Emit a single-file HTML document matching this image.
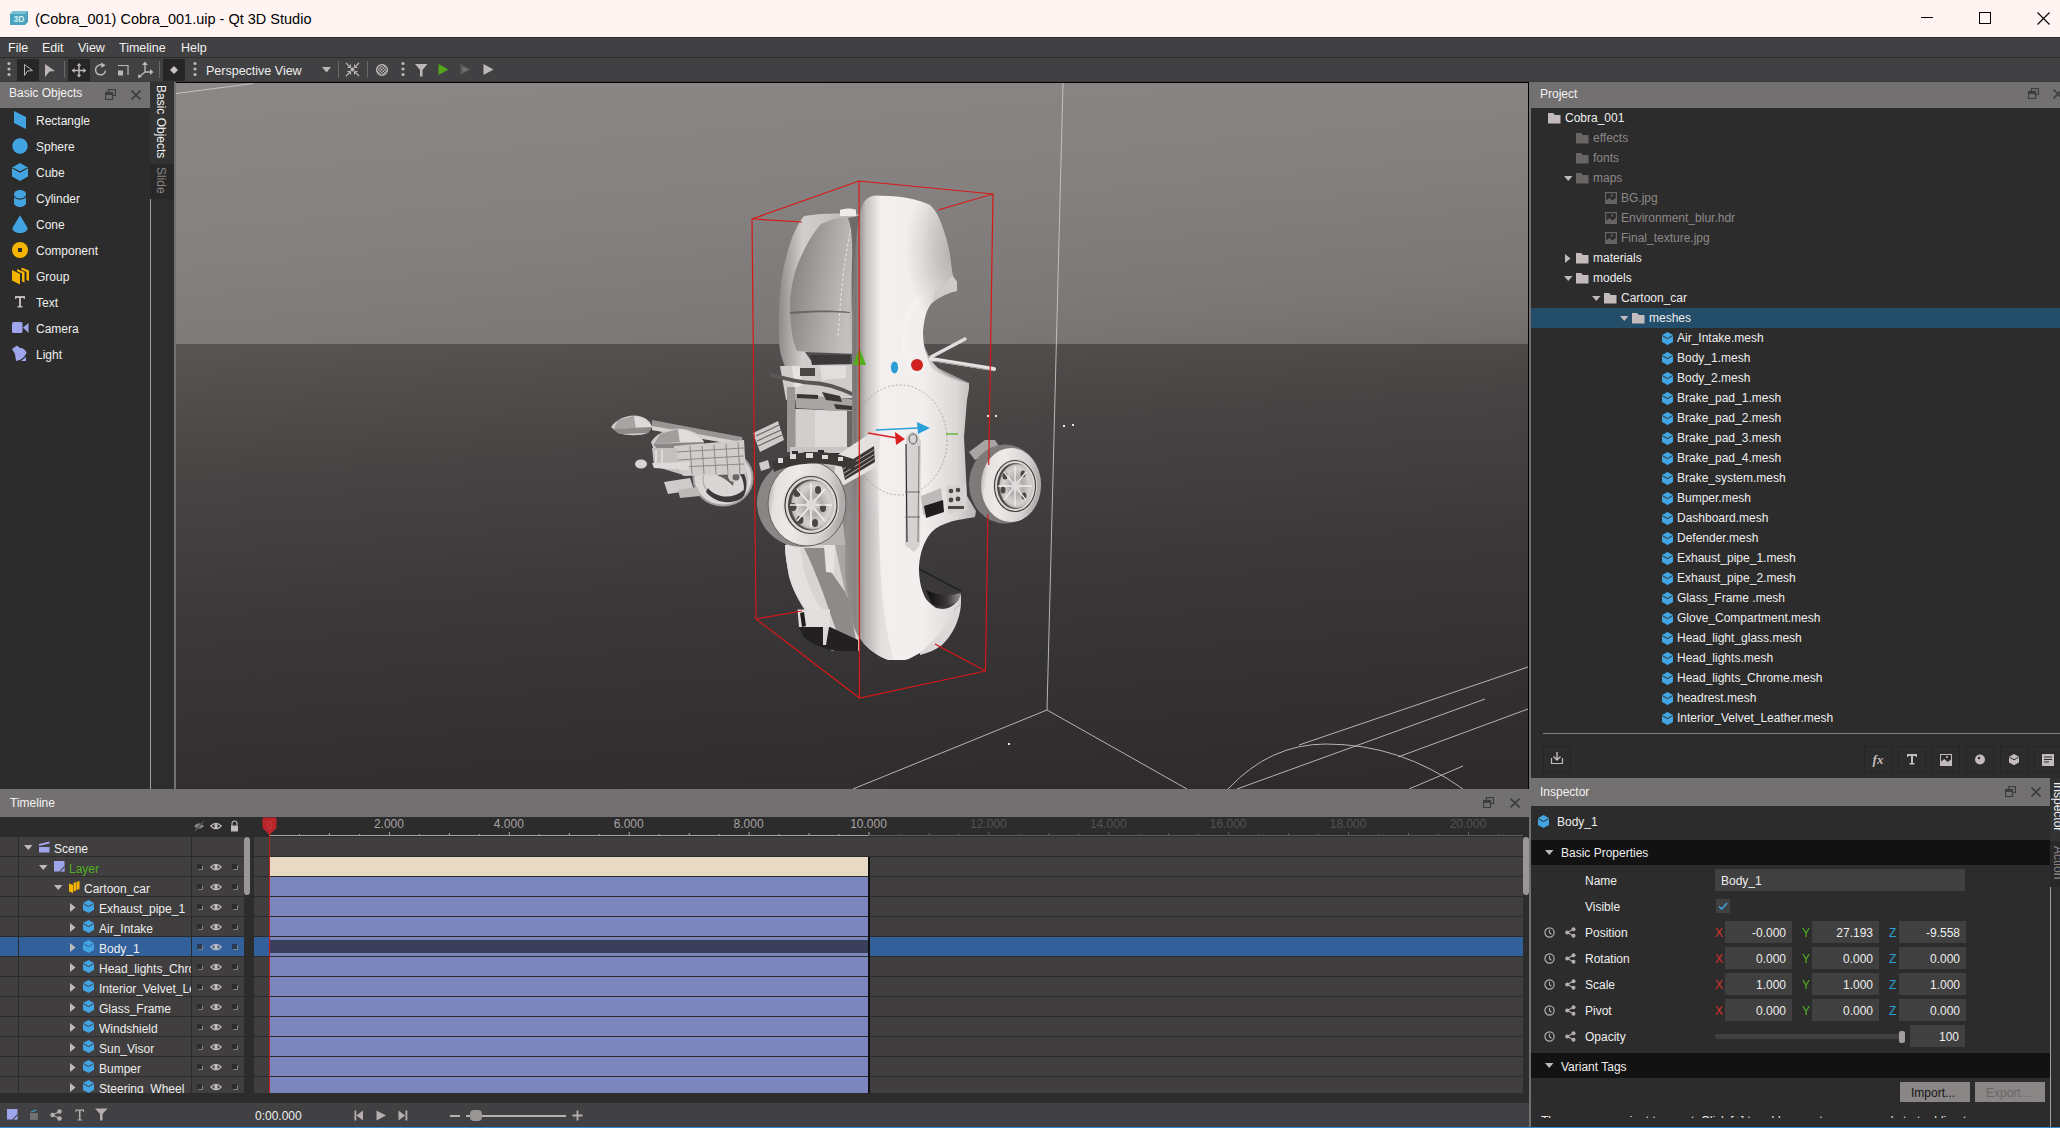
<!DOCTYPE html><html><head><meta charset="utf-8"><style>
*{margin:0;padding:0;box-sizing:border-box}
html,body{width:2060px;height:1128px;overflow:hidden;background:#2e2d2e;font-family:"Liberation Sans",sans-serif}
body>div,body>span,body>svg{position:absolute}
.t{position:absolute;white-space:pre;line-height:1;}
</style></head><body><div style="left:0px;top:0px;width:2060px;height:37px;background:#fff4f2;"></div>
<svg style="left:10px;top:11px;" width="18" height="14" viewBox="0 0 18 14"><path d="M3,0 H18 V11 L15,14 H0 V3 Z" fill="#4aa3bf"/><path d="M3,0 H18 L15,3 H0 Z" fill="#7cc0d4"/><text x="9" y="11" font-size="8.5" font-family="Liberation Sans" font-weight="bold" fill="#d8eef4" text-anchor="middle">3D</text></svg>
<span class="t" style="left:35px;top:11.73px;font-size:14.5px;color:#000000;">(Cobra_001) Cobra_001.uip - Qt 3D Studio</span>
<div style="left:1921px;top:17px;width:12px;height:1px;background:#000;"></div>
<div style="left:1979px;top:12px;width:12px;height:12px;background:transparent;border:1px solid #000"></div>
<svg style="left:2037px;top:12px;" width="13" height="13" viewBox="0 0 13 13"><path d="M0.5,0.5 L12.5,12.5 M12.5,0.5 L0.5,12.5" stroke="#000" stroke-width="1.1"/></svg>
<div style="left:0px;top:37px;width:2060px;height:1px;background:#2a2a2a;"></div>
<div style="left:0px;top:38px;width:2060px;height:19px;background:#414042;"></div>
<span class="t" style="left:8px;top:42.42px;font-size:12.5px;color:#f2f2f2;">File</span>
<span class="t" style="left:42px;top:42.42px;font-size:12.5px;color:#f2f2f2;">Edit</span>
<span class="t" style="left:78px;top:42.42px;font-size:12.5px;color:#f2f2f2;">View</span>
<span class="t" style="left:119px;top:42.42px;font-size:12.5px;color:#f2f2f2;">Timeline</span>
<span class="t" style="left:181px;top:42.42px;font-size:12.5px;color:#f2f2f2;">Help</span>
<div style="left:0px;top:57px;width:2060px;height:1px;background:#2b2b2b;"></div>
<div style="left:0px;top:58px;width:2060px;height:24px;background:#414042;"></div>
<svg style="left:6.5px;top:61px;" width="4" height="16" viewBox="0 0 4 16"><circle cx="2" cy="2.5" r="1.6" fill="#bdb7b7"/><circle cx="2" cy="8" r="1.6" fill="#bdb7b7"/><circle cx="2" cy="13.5" r="1.6" fill="#bdb7b7"/></svg>
<div style="left:17px;top:59px;width:22px;height:22px;background:#262626;"></div>
<svg style="left:17px;top:59px;" width="22" height="22" viewBox="0 0 22 22"><path d="M7.5,5.5 L15.5,11.5 L10.5,12 L7.5,16.5 Z" fill="none" stroke="#bdb7b7" stroke-width="1"/></svg>
<svg style="left:39px;top:59px;" width="22" height="22" viewBox="0 0 22 22"><path d="M6,5 L16,12 L10.5,12.5 L6,18 Z" fill="#bdb7b7"/></svg>
<div style="left:64px;top:61px;width:1px;height:17px;background:#6a6868;"></div>
<div style="left:68px;top:59px;width:22px;height:22px;background:#262626;"></div>
<svg style="left:68px;top:59px;" width="22" height="22" viewBox="0 0 22 22"><path d="M11,5 V17.5 M4.5,11.5 H17.5" stroke="#bdb7b7" stroke-width="1.5"/><path d="M11,4 L8.6,6.8 H13.4 Z M11,18.5 L8.6,15.7 H13.4 Z M3.8,11.5 L6.6,9.1 V13.9 Z M18.2,11.5 L15.4,9.1 V13.9 Z" fill="#bdb7b7"/></svg>
<svg style="left:90px;top:59px;" width="22" height="22" viewBox="0 0 22 22"><path d="M15.5,11.5 A5,5 0 1 1 13,6.5" fill="none" stroke="#bdb7b7" stroke-width="1.5"/><path d="M11,3.5 L15.5,6 L11.5,9 Z" fill="#bdb7b7"/></svg>
<svg style="left:112px;top:59px;" width="22" height="22" viewBox="0 0 22 22"><path d="M6,6.5 H16 V16" fill="none" stroke="#bdb7b7" stroke-width="1.2"/><rect x="6" y="11.5" width="5" height="5" fill="#bdb7b7"/></svg>
<svg style="left:134px;top:59px;" width="22" height="22" viewBox="0 0 22 22"><path d="M11,4 V13 L5,18 M11,13 H17" stroke="#bdb7b7" stroke-width="1.4" fill="none"/><path d="M11,2.5 L8,6 H14 Z M19.5,13 L16,10 V16 Z M4,19 L4.5,15 L8,18 Z" fill="#bdb7b7"/></svg>
<div style="left:159px;top:61px;width:1px;height:17px;background:#6a6868;"></div>
<div style="left:163px;top:59px;width:22px;height:22px;background:#262626;"></div>
<svg style="left:163px;top:59px;" width="22" height="22" viewBox="0 0 22 22"><path d="M11,7 L15,11 L11,15 L7,11 Z" fill="#c8c2c2"/></svg>
<svg style="left:192.5px;top:61px;" width="4" height="16" viewBox="0 0 4 16"><circle cx="2" cy="2.5" r="1.6" fill="#bdb7b7"/><circle cx="2" cy="8" r="1.6" fill="#bdb7b7"/><circle cx="2" cy="13.5" r="1.6" fill="#bdb7b7"/></svg>
<span class="t" style="left:206px;top:65.42px;font-size:12.5px;color:#eeeeee;">Perspective View</span>
<svg style="left:322px;top:67px;" width="10" height="6" viewBox="0 0 10 6"><path d="M0,0 H9 L4.5,5.5 Z" fill="#bdb7b7"/></svg>
<div style="left:338px;top:61px;width:1px;height:17px;background:#6a6868;"></div>
<svg style="left:345px;top:62px;" width="15" height="15" viewBox="0 0 15 15"><circle cx="7.5" cy="7.5" r="2" fill="#bdb7b7"/><path d="M1,1 L5,5 M14,1 L10,5 M1,14 L5,10 M14,14 L10,10" stroke="#bdb7b7" stroke-width="1.1"/><path d="M5.5,5.5 H2.5 M5.5,5.5 V2.5 M9.5,5.5 H12.5 M9.5,5.5 V2.5 M5.5,9.5 H2.5 M5.5,9.5 V12.5 M9.5,9.5 H12.5 M9.5,9.5 V12.5" stroke="#bdb7b7" stroke-width="1.1"/></svg>
<div style="left:367px;top:61px;width:1px;height:17px;background:#6a6868;"></div>
<svg style="left:375px;top:63px;" width="14" height="14" viewBox="0 0 14 14"><defs><pattern id="ck" width="3" height="3" patternUnits="userSpaceOnUse"><rect width="1.5" height="1.5" fill="#bdb7b7"/><rect x="1.5" y="1.5" width="1.5" height="1.5" fill="#bdb7b7"/></pattern></defs><circle cx="7" cy="7" r="5.5" fill="url(#ck)" stroke="#bdb7b7" stroke-width="1.1"/></svg>
<svg style="left:400.5px;top:61px;" width="4" height="16" viewBox="0 0 4 16"><circle cx="2" cy="2.5" r="1.6" fill="#bdb7b7"/><circle cx="2" cy="8" r="1.6" fill="#bdb7b7"/><circle cx="2" cy="13.5" r="1.6" fill="#bdb7b7"/></svg>
<svg style="left:415px;top:64px;" width="13" height="13" viewBox="0 0 13 13"><path d="M0,0 H12.5 L7.5,6 V12.5 H5 V6 Z" fill="#bdb7b7"/></svg>
<svg style="left:438px;top:64px;" width="11" height="11" viewBox="0 0 11 11"><path d="M0.5,0 L10.5,5.5 L0.5,11 Z" fill="#55a71a"/></svg>
<svg style="left:460px;top:64px;" width="12" height="11" viewBox="0 0 12 11"><path d="M0.5,0 L10.5,5.5 L0.5,11 Z" fill="#5e5c5c"/><path d="M3,3 L7,5.5 L3,8 Z" fill="#777"/></svg>
<svg style="left:483px;top:64px;" width="11" height="11" viewBox="0 0 11 11"><path d="M0.5,0 L10.5,5.5 L0.5,11 Z" fill="#bdb7b7"/></svg>
<div style="left:0px;top:81px;width:2060px;height:1px;background:#3a393a;"></div>
<div style="left:0px;top:82px;width:150px;height:26px;background:#727070;"></div>
<span class="t" style="left:9px;top:86.84px;font-size:12px;color:#f2f2f2;">Basic Objects</span>
<svg style="left:105px;top:89px;" width="11" height="11" viewBox="0 0 11 11"><rect x="3.5" y="0.5" width="7" height="6" fill="none" stroke="#3e3d3d" stroke-width="1.2"/><rect x="0.5" y="3.5" width="7" height="7" fill="#727070" stroke="#3e3d3d" stroke-width="1.2"/><rect x="1" y="4" width="6" height="2" fill="#3e3d3d"/></svg>
<svg style="left:131px;top:90px;" width="10" height="10" viewBox="0 0 10 10"><path d="M0.5,0.5 L9.5,9.5 M9.5,0.5 L0.5,9.5" stroke="#3e3d3d" stroke-width="1.6"/></svg>
<div style="left:0px;top:108px;width:150px;height:681px;background:#2c2c2c;"></div>
<svg style="left:12px;top:111px;" width="17" height="19" viewBox="0 0 17 19"><path d="M2,0 L14,6 V18 L2,12 Z" fill="#42a5e2"/></svg>
<span class="t" style="left:36px;top:114.84px;font-size:12px;color:#eeeeee;">Rectangle</span>
<svg style="left:12px;top:137px;" width="17" height="19" viewBox="0 0 17 19"><circle cx="8" cy="9" r="7.7" fill="#42a5e2"/></svg>
<span class="t" style="left:36px;top:140.84px;font-size:12px;color:#eeeeee;">Sphere</span>
<svg style="left:12px;top:163px;" width="17" height="19" viewBox="0 0 17 19"><path d="M8,0 L16,4.5 V13.5 L8,18 L0,13.5 V4.5 Z" fill="#42a5e2"/><path d="M0.5,5 L8,9 L15.5,5" fill="none" stroke="#2c2c2c" stroke-width="1.2"/></svg>
<span class="t" style="left:36px;top:166.84px;font-size:12px;color:#eeeeee;">Cube</span>
<svg style="left:12px;top:189px;" width="17" height="19" viewBox="0 0 17 19"><path d="M2,5 A6,4 0 0 1 14,5 V14 A6,4 0 0 1 2,14 Z" fill="#42a5e2"/><path d="M2,6.5 A6,3.6 0 0 0 14,6.5" fill="none" stroke="#2c2c2c" stroke-width="1.2"/></svg>
<span class="t" style="left:36px;top:192.84px;font-size:12px;color:#eeeeee;">Cylinder</span>
<svg style="left:12px;top:215px;" width="17" height="19" viewBox="0 0 17 19"><path d="M8,0.3 L15.6,13 C15.6,16 12,18 8,18 C4,18 0.4,16 0.4,13 Z" fill="#42a5e2"/></svg>
<span class="t" style="left:36px;top:218.84px;font-size:12px;color:#eeeeee;">Cone</span>
<svg style="left:12px;top:241px;" width="17" height="19" viewBox="0 0 17 19"><circle cx="8" cy="9" r="8" fill="#f4b400"/><rect x="6" y="7" width="4" height="4" fill="#2c2c2c"/></svg>
<span class="t" style="left:36px;top:244.84px;font-size:12px;color:#eeeeee;">Component</span>
<svg style="left:12px;top:267px;" width="17" height="19" viewBox="0 0 17 19"><path d="M0,3 L8,7 V17.6 L0,13.5 Z M5,2 L12.5,5 V15.5 L10,14.5 V6.5 L5,4.2 Z M9.5,0.5 L17,3.5 V14 L14.5,13 V5 L9.5,2.7 Z" fill="#f4b400"/></svg>
<span class="t" style="left:36px;top:270.84px;font-size:12px;color:#eeeeee;">Group</span>
<svg style="left:12px;top:293px;" width="17" height="19" viewBox="0 0 17 19"><path d="M3,3 H13 V6 H12 L11.5,5 H9 V13 H10.5 V14.5 H5.5 V13 H7 V5 H4.5 L4,6 H3 Z" fill="#bdb7b7"/></svg>
<span class="t" style="left:36px;top:296.84px;font-size:12px;color:#eeeeee;">Text</span>
<svg style="left:12px;top:319px;" width="17" height="19" viewBox="0 0 17 19"><rect x="0" y="3" width="10.5" height="11" rx="1.5" fill="#9ea5ea"/><path d="M11,8.5 L16.5,4 V14 Z" fill="#9ea5ea"/></svg>
<span class="t" style="left:36px;top:322.84px;font-size:12px;color:#eeeeee;">Camera</span>
<svg style="left:12px;top:345px;" width="17" height="19" viewBox="0 0 17 19"><path d="M0,4 L5,0.5 L8,3 C11,3 14,5 14.5,8 L12,12 C10,14 8,15 4,16 L3,9 Z" fill="#9ea5ea"/><path d="M9,16 L14,12 L14,16 Z" fill="#9ea5ea"/></svg>
<span class="t" style="left:36px;top:348.84px;font-size:12px;color:#eeeeee;">Light</span>
<div style="left:150px;top:82px;width:24px;height:707px;background:#2e2d2e;"></div>
<div style="left:150px;top:82px;width:24px;height:82px;background:#333233;"></div>
<span class="t" style="left:155px;top:85px;font-size:12px;color:#f2f2f2;writing-mode:vertical-rl;">Basic Objects</span>
<div style="left:150px;top:164px;width:24px;height:35px;background:#282828;"></div>
<span class="t" style="left:155px;top:167px;font-size:12px;color:#8a8686;writing-mode:vertical-rl;">Slide</span>
<div style="left:150px;top:199px;width:1px;height:590px;background:#a39e9e;"></div>
<div style="left:174px;top:82px;width:2px;height:707px;background:#737272;"></div>
<div style="left:176px;top:83px;width:1352px;height:261px;background:linear-gradient(175deg,#8b8786 0%,#858180 45%,#7c7877 80%,#72706f 97%,#6c6a69 100%)"></div>
<div style="left:176px;top:344px;width:1352px;height:445px;background:linear-gradient(176deg,#575655 0%,#474544 25%,#3a3839 52%,#2c2a2b 100%)"></div>
<div style="left:176px;top:82px;width:1353px;height:1px;background:#000;"></div>
<div style="left:1528px;top:82px;width:1px;height:707px;background:#000;"></div>
<svg style="left:176px;top:83px" width="1352" height="706" viewBox="176 83 1352 706"><g stroke="#cfcaca" stroke-width="1" fill="none" opacity="0.85"><path d="M176,93.5 L253,83.5"/><path d="M1063,83 L1047,710 L853,789 M1047,710 L1187,789"/><path d="M1528,667 L1299,745 M1485,699 L1237,789 M1528,709 L1398,757 M1463,766 L1409,789"/><path d="M1228,789 Q1270,744 1326,744 Q1400,744 1463,789"/></g><defs>
<linearGradient id="gFront" x1="0" y1="0" x2="1" y2="0">
<stop offset="0" stop-color="#9a9696"/><stop offset="0.08" stop-color="#7a7676"/><stop offset="0.16" stop-color="#c4c0c0"/><stop offset="0.27" stop-color="#f3efef"/><stop offset="0.6" stop-color="#f2eeee"/><stop offset="0.85" stop-color="#dcd8d8"/><stop offset="1" stop-color="#b9b5b5"/>
</linearGradient>
<linearGradient id="gFrontLow" x1="0" y1="0" x2="1" y2="0">
<stop offset="0" stop-color="#b5b1b1"/><stop offset="0.2" stop-color="#e2dede"/><stop offset="0.35" stop-color="#f0ecec"/><stop offset="0.7" stop-color="#f6f2f2"/><stop offset="1" stop-color="#d6d2d2"/>
</linearGradient>
<linearGradient id="gPanel" x1="0" y1="0" x2="1" y2="0.3">
<stop offset="0" stop-color="#7e7a7a"/><stop offset="0.35" stop-color="#989494"/><stop offset="0.75" stop-color="#b4b0b0"/><stop offset="1" stop-color="#c4c0c0"/>
</linearGradient>
<linearGradient id="gFrame" x1="0" y1="0" x2="1" y2="0">
<stop offset="0" stop-color="#8e8a8a"/><stop offset="0.3" stop-color="#d2cece"/><stop offset="0.6" stop-color="#c8c4c4"/><stop offset="1" stop-color="#b8b4b4"/>
</linearGradient>
<linearGradient id="gLow" x1="0" y1="0" x2="1" y2="0">
<stop offset="0" stop-color="#c8c4c4"/><stop offset="0.25" stop-color="#e4e0e0"/><stop offset="0.55" stop-color="#a29e9e"/><stop offset="0.85" stop-color="#cfcbcb"/><stop offset="1" stop-color="#e8e4e4"/>
</linearGradient>
<linearGradient id="gTire" x1="0" y1="0" x2="1" y2="0.2">
<stop offset="0" stop-color="#8e8a8a"/><stop offset="0.2" stop-color="#c2bebe"/><stop offset="0.45" stop-color="#e8e4e4"/><stop offset="0.8" stop-color="#dad6d6"/><stop offset="1" stop-color="#a5a1a1"/>
</linearGradient>
<radialGradient id="gRim" cx="0.55" cy="0.5" r="0.5">
<stop offset="0" stop-color="#e0dcdc"/><stop offset="0.35" stop-color="#b0acac"/><stop offset="0.75" stop-color="#d6d2d2"/><stop offset="0.92" stop-color="#c4c0c0"/><stop offset="1" stop-color="#4a4646"/>
</radialGradient>
<linearGradient id="gTire2" x1="0" y1="0" x2="1" y2="0.15">
<stop offset="0" stop-color="#9e9a9a"/><stop offset="0.15" stop-color="#e6e2e2"/><stop offset="0.4" stop-color="#eeeaea"/><stop offset="0.8" stop-color="#d4d0d0"/><stop offset="1" stop-color="#b0acac"/>
</linearGradient>
<radialGradient id="gShade" cx="0.5" cy="0.5" r="0.5">
<stop offset="0" stop-color="#a29e9e" stop-opacity="0.85"/><stop offset="0.5" stop-color="#b0acac" stop-opacity="0.5"/><stop offset="1" stop-color="#b0acac" stop-opacity="0"/>
</radialGradient>
<clipPath id="cpFront"><path d="M861,210 C863,201 868,196 875,195.5 L889,196 C902,196.5 918,199 930,205 C938,212 942,225 946,238 C948,245 949,250 950,256 C951,265 952,272 953,276 L957,282 L957,291 C950,292 940,296 932,303 C927,308 924,318 923,332 C923,340 924,347 926,352 C929,360 936,368 944,373 C950,377 960,381 969,383 L969,389 L967,400 L964,437 L967,496 L976,511 L975,517 C965,519 955,520 950,522 C940,525 934,529 930,534 C924,542 920,552 919,567 C919,580 921,590 926,599 C930,604 935,608 942,609 C948,609 954,606 958,600 L961,594 L961,604 L955,609 C953,615 952,622 951,625 C948,632 945,636 942,639 C936,643 930,647 920,653 C914,656 910,659 905,660 L888,660 C880,657 873,653 864,644 C858,636 855,630 854,627 C851,615 849,605 848,596 C846,585 845,575 845,564 C845,550 846,540 846,532 L850,500 L852,440 L852,316 C853,290 854,270 854,258 C856,238 858,220 862,205 Z"/></clipPath>
<linearGradient id="gTail" x1="0" y1="0" x2="1" y2="0">
<stop offset="0" stop-color="#0c0a0a"/><stop offset="0.6" stop-color="#3a3838"/><stop offset="1" stop-color="#9a9696"/>
</linearGradient>
<linearGradient id="gCrease" x1="0" y1="0" x2="1" y2="0">
<stop offset="0" stop-color="#8a8686" stop-opacity="0.5"/><stop offset="0.6" stop-color="#b0acac" stop-opacity="0.35"/><stop offset="1" stop-color="#d0cccc" stop-opacity="0.25"/>
</linearGradient>
<linearGradient id="gFadeV" x1="0" y1="0" x2="0" y2="1">
<stop offset="0" stop-color="#fff" stop-opacity="0"/><stop offset="0.35" stop-color="#fff" stop-opacity="1"/><stop offset="1" stop-color="#fff" stop-opacity="1"/>
</linearGradient>
<mask id="mFade" maskContentUnits="userSpaceOnUse"><rect x="830" y="440" width="80" height="230" fill="url(#gFadeV)"/></mask>
</defs>
<!-- hidden red edges -->
<g stroke="#d01818" stroke-width="1.2" fill="none">
<path d="M752,219 L880,227 L993,194 M756,619 L856,602 L985.5,671 M880,227 L856,602" opacity="0"/>
</g>
<!-- ===== back body upper ===== -->
<path d="M804,216 C820,213 840,213 859,214 L859,372 L788,372 C782,362 779,350 779,340 C778,310 780,280 785,262 C790,240 796,226 804,216 Z" fill="url(#gFrame)"/>
<path d="M821,224 C834,218 846,216 857,216 C852,240 850,280 849,322 C850,335 851,345 853,353 L849,355 L797,351 C792,340 790,325 790,302 C791,285 795,270 800,259 C806,245 813,233 821,224 Z" fill="url(#gPanel)"/>
<path d="M852,224 C846,250 842,280 840,310 L838,336" stroke="#e8e4e4" stroke-width="1" stroke-dasharray="3,2" fill="none"/>
<path d="M790,312 C810,310 835,310 850,312 L850,313 C835,312 810,312 790,314 Z" fill="#6a6666"/>
<path d="M848,218 L858,216 L862,216 L862,372 L855,362 C852,340 851,300 852,260 C853,240 851,225 848,218 Z" fill="#6e6a6a"/>
<path d="M840,210 C846,208 852,208 856,210 L856,216 L840,216 Z" fill="#eeeaea"/>
<path d="M805,352 L857,354 L862,366 L812,362 Z" fill="#4e4c4c"/>
<!-- machinery -->
<path d="M780,366 L862,364 L862,398 L786,400 Z" fill="#cfcbcb"/>
<path d="M810,355 L850,355 L850,364 L812,365 Z" fill="#3a3838"/>
<path d="M792,366 L800,366 L802,386 L794,388 Z" fill="#e6e2e2"/>
<path d="M820,366 L846,366 L846,378 L822,380 Z" fill="#e2dede"/>
<path d="M800,368 L815,368 L815,376 L800,376 Z" fill="#4a4646"/>
<path d="M770,373 C790,378 805,381 813,381 C830,382 845,388 860,396 L860,400 C845,392 830,386 813,385 C800,384 788,381 770,377 Z" fill="#5a5656"/>
<path d="M787,387 L795,387 L795,452 L787,452 Z" fill="#9a9696"/>
<path d="M795,394 L858,400 L858,412 L796,408 Z" fill="#a8a4a4"/>
<g fill="#3a3636"><path d="M797,394 L818,395 L818,399 L797,398 Z"/><path d="M822,392 L840,396 L842,402 L826,400 Z"/><path d="M834,404 L852,406 L852,410 L836,409 Z"/></g>
<path d="M795.5,409 L847,411 L847,451 L795.5,451 Z" fill="#dedada"/>
<path d="M795.5,409 L815,410 L815,451 L795.5,451 Z" fill="#d2cece"/>
<path d="M847,411 L855,411 L855,450 L847,450 Z" fill="#6a6666"/>
<path d="M855,400 L862,400 L862,452 L855,452 Z" fill="#c8c4c4"/>
<path d="M790,447 L862,447 L862,468 L790,468 Z" fill="#c8c4c4"/>
<g fill="#2e2c2c"><rect x="792" y="451" width="6" height="4"/><rect x="804" y="452" width="8" height="4"/><rect x="818" y="450" width="6" height="5"/><rect x="830" y="453" width="10" height="4"/><rect x="846" y="451" width="7" height="5"/></g>
<!-- ===== back body lower ===== -->
<path d="M786,466 L862,466 L862,548 L786,548 Z" fill="#b8b4b4"/>
<path d="M836,466 L862,466 L862,548 L846,548 Z" fill="#8e8a8a"/>
<path d="M785,545 L860,545 L860,651 L832,651 C818,640 810,625 806,612 C798,600 792,588 789,576 C787,565 785,555 785,545 Z" fill="#d8d4d4"/>
<path d="M785,545 L800,545 C802,570 810,595 824,612 L808,611 C798,600 792,588 789,576 C787,565 785,555 785,545 Z" fill="#e4e0e0"/>
<path d="M804,548 L824,548 L831,572 L848,596 L856,640 L840,640 C832,620 826,600 820,585 C815,572 810,560 804,548 Z" fill="#8e8a8a"/>
<path d="M824,545 L835,545 L834,573 L826,572 Z" fill="#e6e2e2"/>
<path d="M835,545 L851,545 L852,600 L846,596 Z" fill="#a9a5a5"/>
<path d="M797.5,609.5 L830,609.5 L830,627 L799,627 Z" fill="#e2dede"/>
<path d="M800,613 L804,612 L806,626 L802,627 Z" fill="#1e1c1c"/>
<path d="M799,627 L830,627 L858,640 L858,651 L835,651 C820,648 808,642 803,636 Z" fill="#222020"/>
<path d="M823,627 L829,627 L826,645 L823,645 Z" fill="#dcd8d8"/>
<!-- ===== front body ===== -->
<path d="M861,210 C863,201 868,196 875,195.5 L889,196 C902,196.5 918,199 930,205 C938,212 942,225 946,238 C948,245 949,250 950,256 C951,265 952,272 953,276 L957,282 L957,291 C950,292 940,296 932,303 C927,308 924,318 923,332 C923,340 924,347 926,352 C929,360 936,368 944,373 C950,377 960,381 969,383 L969,389 L967,400 L964,437 L967,496 L976,511 L975,517 C965,519 955,520 950,522 C940,525 934,529 930,534 C924,542 920,552 919,567 C919,580 921,590 926,599 C930,604 935,608 942,609 C948,609 954,606 958,600 L961,594 L961,604 L955,609 C953,615 952,622 951,625 C948,632 945,636 942,639 C936,643 930,647 920,653 C914,656 910,659 905,660 L888,660 C880,657 873,653 864,644 C858,636 855,630 854,627 C851,615 849,605 848,596 C846,585 845,575 845,564 C845,550 846,540 846,532 L850,500 L852,440 L852,316 C853,290 854,270 854,258 C856,238 858,220 862,205 Z" fill="url(#gFront)"/>

<path d="M938,277 C925,290 910,302 905,316 C902,330 902,345 903,356 C905,364 910,372 915,378 L918,372 C911,360 908,345 908,330 C910,312 922,296 945,280 Z" fill="#ffffff" opacity="0.18"/>
<ellipse cx="960" cy="250" rx="55" ry="85" fill="url(#gShade)" clip-path="url(#cpFront)"/>
<g clip-path="url(#cpFront)"><path d="M840,440 L877,440 C879,540 880,580 884,610 C886,630 890,645 894,662 L840,662 Z" fill="url(#gCrease)" mask="url(#mFade)"/></g>
<path d="M952,276 L957,282 L957,291 C950,292 940,296 932,303 L935,292 C942,286 948,280 952,276 Z" fill="#cfcbcb"/>
<path d="M924,332 C923,345 927,357 938,368 L969,383 C956,382 942,376 932,368 C926,358 924,346 924,332 Z" fill="#c4c0c0" opacity="0.7"/>

<path d="M920,653 C935,640 948,625 955,609 L961,604 C960,620 952,636 942,645 C935,650 928,653 920,655 Z" fill="#dcd8d8"/>
<path d="M919,570 L961,592 L958,600 C950,606 942,609 936,608 C930,604 925,596 922,588 Z" fill="#3a3838"/>
<path d="M919,569 L961,591" stroke="#1a1818" stroke-width="1.2"/>
<path d="M926,590 C938,596 950,596 961,593 L958,601 C950,607 940,609 932,604 Z" fill="url(#gTail)"/>
<!-- dotted gizmo circle -->
<ellipse cx="900" cy="440" rx="47" ry="55" fill="none" stroke="#8a8686" stroke-width="0.8" stroke-dasharray="2,2" opacity="0.8"/>
<!-- rods -->
<path d="M931,357 L965,339" stroke="#e0dcdc" stroke-width="3.5" stroke-linecap="round"/>
<path d="M931,359 L994,369" stroke="#e6e2e2" stroke-width="4.2" stroke-linecap="round"/>
<path d="M935,361 L993,370.5" stroke="#a29e9e" stroke-width="1"/>
<!-- steering column & dashboard -->
<path d="M906,438 C908,432 914,430 918,434 L921,442 L920,545 L914,552 L905,545 Z" fill="#d6d2d2"/>
<path d="M906,444 L907,542" stroke="#2e2c2c" stroke-width="1.2"/>
<path d="M919,446 L918,542" stroke="#8a8686" stroke-width="1.2"/>
<path d="M905,492 L920,492 M905,517 L920,517" stroke="#6a6666" stroke-width="1"/>
<ellipse cx="913" cy="439" rx="4" ry="5" fill="none" stroke="#555" stroke-width="1"/>
<path d="M921,496 L941,488 L943,508 L923,515 Z" fill="#bebaba"/>
<path d="M924,506 L943,500 L944,512 L926,518 Z" fill="#1e1c1c"/>
<path d="M946,486 L966,484 L967,510 L948,514 Z" fill="#d6d2d2"/>
<g fill="#4a4646"><circle cx="951" cy="491" r="2.3"/><circle cx="958" cy="490" r="2.3"/><circle cx="951" cy="500" r="2.4"/><circle cx="958" cy="499" r="2.4"/><rect x="948" y="506" width="16" height="3"/></g>
<!-- grille piece -->
<path d="M836,456 L872,432 L880,436 L878,466 L842,486 L834,480 Z" fill="#e4e0e0"/>
<path d="M842,466 L874,446 L875,462 L845,480 Z" fill="#3a3636"/>
<g stroke="#b5b1b1" stroke-width="1"><path d="M843,469 L874,450 M844,473 L875,454 M845,477 L875,458"/></g>
<!-- ===== left front wheel ===== -->
<ellipse cx="802" cy="503" rx="45" ry="44" fill="#8a8686"/>
<ellipse cx="807" cy="503.5" rx="39" ry="42.5" fill="url(#gTire2)"/>
<ellipse cx="807" cy="503.5" rx="39" ry="42.5" fill="none" stroke="#6a6666" stroke-width="1"/>
<ellipse cx="811" cy="505" rx="28" ry="30.5" fill="#dcd8d8"/>
<ellipse cx="811" cy="505" rx="26" ry="28.5" fill="none" stroke="#3e3a3a" stroke-width="1.2"/>
<ellipse cx="811" cy="505" rx="23" ry="25.5" fill="url(#gRim)"/>
<g fill="#4a4646"><ellipse cx="797" cy="493" rx="3.5" ry="4"/><ellipse cx="793" cy="507" rx="3.5" ry="4"/><ellipse cx="800" cy="520" rx="3.5" ry="4"/><ellipse cx="818" cy="490" rx="3" ry="4"/><ellipse cx="823" cy="508" rx="3" ry="4"/><ellipse cx="815" cy="523" rx="3" ry="4"/></g>
<g stroke="#f2eeee" stroke-width="1.6"><path d="M811,483 L811,527 M790,505 L832,505 M797,489 L825,521 M825,489 L797,521"/></g>
<circle cx="811" cy="505" r="5" fill="#e0dcdc"/>
<path d="M772,462 C800,448 830,450 856,460 L854,470 C830,462 800,460 774,472 Z" fill="#3c3838"/>
<g fill="#dedada"><rect x="778" y="458" width="5" height="5"/><rect x="790" y="454" width="6" height="5"/><rect x="806" y="453" width="7" height="5"/><rect x="822" y="455" width="6" height="4"/><rect x="838" y="457" width="5" height="4"/></g>
<path d="M759,463 L768,460 L770,468 L761,471 Z" fill="#cfcbcb"/>
<!-- ===== right wheel ===== -->
<path d="M969,452 L985,440 L995,440 L1000,448 L975,460 Z" fill="#a8a4a4"/>
<ellipse cx="1005" cy="484" rx="36" ry="39.5" fill="#7e7a7a"/>
<ellipse cx="1011" cy="485" rx="30" ry="37" fill="url(#gTire2)"/>
<ellipse cx="1015" cy="486" rx="22" ry="27" fill="#dcd8d8"/>
<ellipse cx="1015" cy="486" rx="20.5" ry="25.5" fill="none" stroke="#3e3a3a" stroke-width="1.1"/>
<ellipse cx="1015" cy="486" rx="18" ry="23" fill="url(#gRim)"/>
<g fill="#4a4646"><ellipse cx="1005" cy="476" rx="2.5" ry="3.5"/><ellipse cx="1003" cy="490" rx="2.5" ry="3.5"/><ellipse cx="1023" cy="474" rx="2.5" ry="3.5"/><ellipse cx="1024" cy="496" rx="2.5" ry="3.5"/></g>
<g stroke="#f2eeee" stroke-width="1.3"><path d="M1015,466 L1015,506 M998,486 L1032,486 M1004,472 L1026,500 M1026,472 L1004,500"/></g>
<circle cx="1015" cy="486" r="3.5" fill="#e0dcdc"/>
<!-- ===== rear left ring (brake) ===== -->
<ellipse cx="723" cy="478" rx="29.5" ry="27.5" fill="#dad6d6"/>
<ellipse cx="723" cy="478" rx="29.5" ry="27.5" fill="none" stroke="#a29e9e" stroke-width="2"/>
<ellipse cx="725" cy="479" rx="22" ry="20" fill="none" stroke="#b8b4b4" stroke-width="1.5"/>
<path d="M707,468 C715,462 732,462 742,470 C738,474 734,478 733,486 C726,478 716,474 707,472 Z" fill="#646060"/>
<path d="M708,488 C716,498 732,500 744,490 C744,482 742,476 738,472 L742,470 C748,478 748,492 742,498 C730,506 714,502 706,492 Z" fill="#3a3838"/>
<ellipse cx="734" cy="476" rx="6" ry="6" fill="#d0cccc"/>
<ellipse cx="736" cy="477" rx="3.5" ry="3.5" fill="#6a6666"/>
<!-- ===== exhaust & domes ===== -->
<path d="M611,427 C616,420 624,416 634,415.5 C644,416 650,420 652,427 L648,433 C640,436 628,436 618,433 Z" fill="#cfcbcb"/>
<path d="M618,420 L634,416 L636,428 L614,429 Z" fill="#a8a4a4"/>
<path d="M634,416 C642,417 648,420 652,427 L636,428 Z" fill="#dedada"/>
<path d="M613,429 L652,427 L648,433 L620,434 Z" fill="#8e8a8a"/>
<path d="M652,420 L742,437 L743,446 L652,430 Z" fill="#9a9696"/>
<path d="M652,426 L742,442 L743,446 L652,430 Z" fill="#d6d2d2"/>
<path d="M651,442 C656,434 666,429 678,428.5 C692,429 700,434 704,442 L700,450 C688,454 666,454 654,450 Z" fill="#cfcbcb"/>
<path d="M660,434 L678,429 L680,442 L654,444 Z" fill="#a29e9e"/>
<path d="M678,429 C690,430 700,436 704,442 L680,442 Z" fill="#e0dcdc"/>
<path d="M653,444 L704,442 L700,450 L660,452 Z" fill="#8a8686"/>
<path d="M674,446 L744,440 L746,474 L684,476 L674,470 Z" fill="#d0cccc"/>
<g stroke="#858181" stroke-width="0.9"><path d="M676,452 L744,448 M678,460 L744,456 M680,467 L744,464 M690,446 L692,474 M702,446 L704,474 M714,445 L716,474 M726,444 L728,474 M738,442 L740,474"/></g>
<path d="M652,448 L676,448 L680,474 L654,466 Z" fill="#c4c0c0"/>
<g stroke="#e8e4e4" stroke-width="1.5"><path d="M656,450 L656,466 M662,450 L662,466"/></g>
<path d="M652,463 L690,462 L688,470 L654,468 Z" fill="#dedada"/>
<ellipse cx="641" cy="464" rx="6" ry="4.5" fill="#d8d4d4"/>
<path d="M664,482 L690,478 L694,490 L668,494 Z" fill="#cfcbcb"/>
<path d="M678,490 L698,487 L700,496 L680,498 Z" fill="#bdb9b9"/>
<path d="M753,433 L778,421 L784,440 L760,452 Z" fill="#cfcbcb"/>
<g stroke="#6a6666" stroke-width="1.1"><path d="M756,436 L779,425 M757,441 L781,430 M758,446 L782,435"/></g>
<!-- ===== gizmo ===== -->
<path d="M859.5,440 L859.5,364" stroke="#52b01e" stroke-width="1.3"/>
<path d="M853,365 L859.5,348 L866,365 Z" fill="#52b01e"/>
<path d="M868,433 L897,438" stroke="#d82020" stroke-width="1.3"/>
<path d="M895,432 L905,439 L896,445 Z" fill="#d82020"/>
<path d="M876,430 L918,428" stroke="#2ba0d8" stroke-width="1.3"/>
<path d="M917,422 L930,428 L918,434 Z" fill="#2ba0d8"/>
<path d="M946,434 L958,434" stroke="#52b01e" stroke-width="1.3"/>
<ellipse cx="894.5" cy="367.5" rx="3.6" ry="6" fill="#2b9fd5"/>
<circle cx="917" cy="365" r="6" fill="#d02020"/>
<!-- ===== visible red edges ===== -->
<g stroke="#d81818" stroke-width="1.2" fill="none">
<path d="M752,219 L859,181 L993,194"/>
<path d="M752,219 L756,619 L859.5,698 L985.5,671"/>
<path d="M859,181 L859.5,698"/>
<path d="M993,194 L988.7,465 M987.9,514 L985.5,671"/>
<path d="M993,194 L938,210 M752,219 L802,222 M756,619 L802,611 M985.5,671 L935,644"/>
</g>
<g fill="#e8e4e4"><rect x="987" y="415" width="2" height="2"/><rect x="995" y="415" width="2" height="2"/><rect x="1063" y="425" width="2" height="2"/><rect x="1072" y="424" width="2" height="2"/><rect x="1008" y="743" width="2" height="2"/></g>
</svg>
<div style="left:1529px;top:82px;width:531px;height:26px;background:#727070;"></div>
<div style="left:1529px;top:82px;width:2px;height:1045px;background:#727070;"></div>
<span class="t" style="left:1540px;top:87.84px;font-size:12px;color:#f2f2f2;">Project</span>
<svg style="left:2028px;top:88px;" width="11" height="11" viewBox="0 0 11 11"><rect x="3.5" y="0.5" width="7" height="6" fill="none" stroke="#3e3d3d" stroke-width="1.2"/><rect x="0.5" y="3.5" width="7" height="7" fill="#727070" stroke="#3e3d3d" stroke-width="1.2"/><rect x="1" y="4" width="6" height="2" fill="#3e3d3d"/></svg>
<svg style="left:2053px;top:89px;" width="10" height="10" viewBox="0 0 10 10"><path d="M0.5,0.5 L9.5,9.5 M9.5,0.5 L0.5,9.5" stroke="#3e3d3d" stroke-width="1.6"/></svg>
<div style="left:1531px;top:108px;width:529px;height:670px;background:#2c2c2c;"></div>
<div style="left:1531px;top:308px;width:529px;height:20px;background:#234d69;"></div>
<svg style="left:1548px;top:113px;" width="13" height="11" viewBox="0 0 13 11"><path d="M0,0 H5 L7,2 H12.5 V10.5 H0 Z" fill="#c4bcbc"/></svg>
<span class="t" style="left:1565px;top:111.84px;font-size:12px;color:#eeeeee;">Cobra_001</span>
<svg style="left:1576px;top:133px;" width="13" height="11" viewBox="0 0 13 11"><path d="M0,0 H5 L7,2 H12.5 V10.5 H0 Z" fill="#6a6565"/></svg>
<span class="t" style="left:1593px;top:131.84px;font-size:12px;color:#8c8888;">effects</span>
<svg style="left:1576px;top:153px;" width="13" height="11" viewBox="0 0 13 11"><path d="M0,0 H5 L7,2 H12.5 V10.5 H0 Z" fill="#6a6565"/></svg>
<span class="t" style="left:1593px;top:151.84px;font-size:12px;color:#8c8888;">fonts</span>
<svg style="left:1564px;top:176px;" width="9" height="6" viewBox="0 0 9 6"><path d="M0,0 H8.5 L4.25,5 Z" fill="#c0b9b9"/></svg>
<svg style="left:1576px;top:173px;" width="13" height="11" viewBox="0 0 13 11"><path d="M0,0 H5 L7,2 H12.5 V10.5 H0 Z" fill="#6a6565"/></svg>
<span class="t" style="left:1593px;top:171.84px;font-size:12px;color:#8c8888;">maps</span>
<svg style="left:1604.5px;top:192px;" width="13" height="12" viewBox="0 0 13 12"><rect x="0" y="0" width="12" height="12" fill="#696464"/><path d="M1.2,1.2 H10.8 V6 L7.5,8.5 L4.5,6 L1.2,8.5 Z" fill="#2c2c2c"/><circle cx="7" cy="3.6" r="1.1" fill="#696464"/></svg>
<span class="t" style="left:1621px;top:191.84px;font-size:12px;color:#8c8888;">BG.jpg</span>
<svg style="left:1604.5px;top:212px;" width="13" height="12" viewBox="0 0 13 12"><rect x="0" y="0" width="12" height="12" fill="#696464"/><path d="M1.2,1.2 H10.8 V6 L7.5,8.5 L4.5,6 L1.2,8.5 Z" fill="#2c2c2c"/><circle cx="7" cy="3.6" r="1.1" fill="#696464"/></svg>
<span class="t" style="left:1621px;top:211.84px;font-size:12px;color:#8c8888;">Environment_blur.hdr</span>
<svg style="left:1604.5px;top:232px;" width="13" height="12" viewBox="0 0 13 12"><rect x="0" y="0" width="12" height="12" fill="#696464"/><path d="M1.2,1.2 H10.8 V6 L7.5,8.5 L4.5,6 L1.2,8.5 Z" fill="#2c2c2c"/><circle cx="7" cy="3.6" r="1.1" fill="#696464"/></svg>
<span class="t" style="left:1621px;top:231.84px;font-size:12px;color:#8c8888;">Final_texture.jpg</span>
<svg style="left:1565px;top:254px;" width="6" height="9" viewBox="0 0 6 9"><path d="M0,0 L5.5,4.5 L0,9 Z" fill="#c0b9b9"/></svg>
<svg style="left:1576px;top:253px;" width="13" height="11" viewBox="0 0 13 11"><path d="M0,0 H5 L7,2 H12.5 V10.5 H0 Z" fill="#c4bcbc"/></svg>
<span class="t" style="left:1593px;top:251.84px;font-size:12px;color:#eeeeee;">materials</span>
<svg style="left:1564px;top:276px;" width="9" height="6" viewBox="0 0 9 6"><path d="M0,0 H8.5 L4.25,5 Z" fill="#c0b9b9"/></svg>
<svg style="left:1576px;top:273px;" width="13" height="11" viewBox="0 0 13 11"><path d="M0,0 H5 L7,2 H12.5 V10.5 H0 Z" fill="#c4bcbc"/></svg>
<span class="t" style="left:1593px;top:271.84px;font-size:12px;color:#eeeeee;">models</span>
<svg style="left:1592px;top:296px;" width="9" height="6" viewBox="0 0 9 6"><path d="M0,0 H8.5 L4.25,5 Z" fill="#c0b9b9"/></svg>
<svg style="left:1604px;top:293px;" width="13" height="11" viewBox="0 0 13 11"><path d="M0,0 H5 L7,2 H12.5 V10.5 H0 Z" fill="#c4bcbc"/></svg>
<span class="t" style="left:1621px;top:291.84px;font-size:12px;color:#eeeeee;">Cartoon_car</span>
<svg style="left:1620px;top:316px;" width="9" height="6" viewBox="0 0 9 6"><path d="M0,0 H8.5 L4.25,5 Z" fill="#c0b9b9"/></svg>
<svg style="left:1632px;top:313px;" width="13" height="11" viewBox="0 0 13 11"><path d="M0,0 H5 L7,2 H12.5 V10.5 H0 Z" fill="#c4bcbc"/></svg>
<span class="t" style="left:1649px;top:311.84px;font-size:12px;color:#eeeeee;">meshes</span>
<svg style="left:1662px;top:332px;" width="11" height="13" viewBox="0 0 11 13"><path d="M5.5,0 L11,3 V10 L5.5,13 L0,10 V3 Z" fill="#42a5e2"/><path d="M0.3,3.6 L5.5,6.6 L10.7,3.6" fill="none" stroke="#2c2c2c" stroke-width="1"/></svg>
<span class="t" style="left:1677px;top:331.84px;font-size:12px;color:#eeeeee;">Air_Intake.mesh</span>
<svg style="left:1662px;top:352px;" width="11" height="13" viewBox="0 0 11 13"><path d="M5.5,0 L11,3 V10 L5.5,13 L0,10 V3 Z" fill="#42a5e2"/><path d="M0.3,3.6 L5.5,6.6 L10.7,3.6" fill="none" stroke="#2c2c2c" stroke-width="1"/></svg>
<span class="t" style="left:1677px;top:351.84px;font-size:12px;color:#eeeeee;">Body_1.mesh</span>
<svg style="left:1662px;top:372px;" width="11" height="13" viewBox="0 0 11 13"><path d="M5.5,0 L11,3 V10 L5.5,13 L0,10 V3 Z" fill="#42a5e2"/><path d="M0.3,3.6 L5.5,6.6 L10.7,3.6" fill="none" stroke="#2c2c2c" stroke-width="1"/></svg>
<span class="t" style="left:1677px;top:371.84px;font-size:12px;color:#eeeeee;">Body_2.mesh</span>
<svg style="left:1662px;top:392px;" width="11" height="13" viewBox="0 0 11 13"><path d="M5.5,0 L11,3 V10 L5.5,13 L0,10 V3 Z" fill="#42a5e2"/><path d="M0.3,3.6 L5.5,6.6 L10.7,3.6" fill="none" stroke="#2c2c2c" stroke-width="1"/></svg>
<span class="t" style="left:1677px;top:391.84px;font-size:12px;color:#eeeeee;">Brake_pad_1.mesh</span>
<svg style="left:1662px;top:412px;" width="11" height="13" viewBox="0 0 11 13"><path d="M5.5,0 L11,3 V10 L5.5,13 L0,10 V3 Z" fill="#42a5e2"/><path d="M0.3,3.6 L5.5,6.6 L10.7,3.6" fill="none" stroke="#2c2c2c" stroke-width="1"/></svg>
<span class="t" style="left:1677px;top:411.84px;font-size:12px;color:#eeeeee;">Brake_pad_2.mesh</span>
<svg style="left:1662px;top:432px;" width="11" height="13" viewBox="0 0 11 13"><path d="M5.5,0 L11,3 V10 L5.5,13 L0,10 V3 Z" fill="#42a5e2"/><path d="M0.3,3.6 L5.5,6.6 L10.7,3.6" fill="none" stroke="#2c2c2c" stroke-width="1"/></svg>
<span class="t" style="left:1677px;top:431.84px;font-size:12px;color:#eeeeee;">Brake_pad_3.mesh</span>
<svg style="left:1662px;top:452px;" width="11" height="13" viewBox="0 0 11 13"><path d="M5.5,0 L11,3 V10 L5.5,13 L0,10 V3 Z" fill="#42a5e2"/><path d="M0.3,3.6 L5.5,6.6 L10.7,3.6" fill="none" stroke="#2c2c2c" stroke-width="1"/></svg>
<span class="t" style="left:1677px;top:451.84px;font-size:12px;color:#eeeeee;">Brake_pad_4.mesh</span>
<svg style="left:1662px;top:472px;" width="11" height="13" viewBox="0 0 11 13"><path d="M5.5,0 L11,3 V10 L5.5,13 L0,10 V3 Z" fill="#42a5e2"/><path d="M0.3,3.6 L5.5,6.6 L10.7,3.6" fill="none" stroke="#2c2c2c" stroke-width="1"/></svg>
<span class="t" style="left:1677px;top:471.84px;font-size:12px;color:#eeeeee;">Brake_system.mesh</span>
<svg style="left:1662px;top:492px;" width="11" height="13" viewBox="0 0 11 13"><path d="M5.5,0 L11,3 V10 L5.5,13 L0,10 V3 Z" fill="#42a5e2"/><path d="M0.3,3.6 L5.5,6.6 L10.7,3.6" fill="none" stroke="#2c2c2c" stroke-width="1"/></svg>
<span class="t" style="left:1677px;top:491.84px;font-size:12px;color:#eeeeee;">Bumper.mesh</span>
<svg style="left:1662px;top:512px;" width="11" height="13" viewBox="0 0 11 13"><path d="M5.5,0 L11,3 V10 L5.5,13 L0,10 V3 Z" fill="#42a5e2"/><path d="M0.3,3.6 L5.5,6.6 L10.7,3.6" fill="none" stroke="#2c2c2c" stroke-width="1"/></svg>
<span class="t" style="left:1677px;top:511.84px;font-size:12px;color:#eeeeee;">Dashboard.mesh</span>
<svg style="left:1662px;top:532px;" width="11" height="13" viewBox="0 0 11 13"><path d="M5.5,0 L11,3 V10 L5.5,13 L0,10 V3 Z" fill="#42a5e2"/><path d="M0.3,3.6 L5.5,6.6 L10.7,3.6" fill="none" stroke="#2c2c2c" stroke-width="1"/></svg>
<span class="t" style="left:1677px;top:531.84px;font-size:12px;color:#eeeeee;">Defender.mesh</span>
<svg style="left:1662px;top:552px;" width="11" height="13" viewBox="0 0 11 13"><path d="M5.5,0 L11,3 V10 L5.5,13 L0,10 V3 Z" fill="#42a5e2"/><path d="M0.3,3.6 L5.5,6.6 L10.7,3.6" fill="none" stroke="#2c2c2c" stroke-width="1"/></svg>
<span class="t" style="left:1677px;top:551.84px;font-size:12px;color:#eeeeee;">Exhaust_pipe_1.mesh</span>
<svg style="left:1662px;top:572px;" width="11" height="13" viewBox="0 0 11 13"><path d="M5.5,0 L11,3 V10 L5.5,13 L0,10 V3 Z" fill="#42a5e2"/><path d="M0.3,3.6 L5.5,6.6 L10.7,3.6" fill="none" stroke="#2c2c2c" stroke-width="1"/></svg>
<span class="t" style="left:1677px;top:571.84px;font-size:12px;color:#eeeeee;">Exhaust_pipe_2.mesh</span>
<svg style="left:1662px;top:592px;" width="11" height="13" viewBox="0 0 11 13"><path d="M5.5,0 L11,3 V10 L5.5,13 L0,10 V3 Z" fill="#42a5e2"/><path d="M0.3,3.6 L5.5,6.6 L10.7,3.6" fill="none" stroke="#2c2c2c" stroke-width="1"/></svg>
<span class="t" style="left:1677px;top:591.84px;font-size:12px;color:#eeeeee;">Glass_Frame .mesh</span>
<svg style="left:1662px;top:612px;" width="11" height="13" viewBox="0 0 11 13"><path d="M5.5,0 L11,3 V10 L5.5,13 L0,10 V3 Z" fill="#42a5e2"/><path d="M0.3,3.6 L5.5,6.6 L10.7,3.6" fill="none" stroke="#2c2c2c" stroke-width="1"/></svg>
<span class="t" style="left:1677px;top:611.84px;font-size:12px;color:#eeeeee;">Glove_Compartment.mesh</span>
<svg style="left:1662px;top:632px;" width="11" height="13" viewBox="0 0 11 13"><path d="M5.5,0 L11,3 V10 L5.5,13 L0,10 V3 Z" fill="#42a5e2"/><path d="M0.3,3.6 L5.5,6.6 L10.7,3.6" fill="none" stroke="#2c2c2c" stroke-width="1"/></svg>
<span class="t" style="left:1677px;top:631.84px;font-size:12px;color:#eeeeee;">Head_light_glass.mesh</span>
<svg style="left:1662px;top:652px;" width="11" height="13" viewBox="0 0 11 13"><path d="M5.5,0 L11,3 V10 L5.5,13 L0,10 V3 Z" fill="#42a5e2"/><path d="M0.3,3.6 L5.5,6.6 L10.7,3.6" fill="none" stroke="#2c2c2c" stroke-width="1"/></svg>
<span class="t" style="left:1677px;top:651.84px;font-size:12px;color:#eeeeee;">Head_lights.mesh</span>
<svg style="left:1662px;top:672px;" width="11" height="13" viewBox="0 0 11 13"><path d="M5.5,0 L11,3 V10 L5.5,13 L0,10 V3 Z" fill="#42a5e2"/><path d="M0.3,3.6 L5.5,6.6 L10.7,3.6" fill="none" stroke="#2c2c2c" stroke-width="1"/></svg>
<span class="t" style="left:1677px;top:671.84px;font-size:12px;color:#eeeeee;">Head_lights_Chrome.mesh</span>
<svg style="left:1662px;top:692px;" width="11" height="13" viewBox="0 0 11 13"><path d="M5.5,0 L11,3 V10 L5.5,13 L0,10 V3 Z" fill="#42a5e2"/><path d="M0.3,3.6 L5.5,6.6 L10.7,3.6" fill="none" stroke="#2c2c2c" stroke-width="1"/></svg>
<span class="t" style="left:1677px;top:691.84px;font-size:12px;color:#eeeeee;">headrest.mesh</span>
<svg style="left:1662px;top:712px;" width="11" height="13" viewBox="0 0 11 13"><path d="M5.5,0 L11,3 V10 L5.5,13 L0,10 V3 Z" fill="#42a5e2"/><path d="M0.3,3.6 L5.5,6.6 L10.7,3.6" fill="none" stroke="#2c2c2c" stroke-width="1"/></svg>
<span class="t" style="left:1677px;top:711.84px;font-size:12px;color:#eeeeee;">Interior_Velvet_Leather.mesh</span>
<div style="left:1543px;top:733px;width:517px;height:1px;background:#858080;"></div>
<div style="left:1543px;top:746px;width:28px;height:27px;background:#2c2c2c;border:1px solid #252525"></div>
<svg style="left:1543px;top:746px;" width="28" height="27" viewBox="0 0 28 27"><path d="M14,6 V14 M10.5,10.5 L14,14 L17.5,10.5" stroke="#c4bcbc" stroke-width="1.4" fill="none"/><path d="M8.5,12 V17.5 H19.5 V12" stroke="#c4bcbc" stroke-width="1.2" fill="none"/></svg>
<div style="left:1864px;top:746px;width:28px;height:27px;background:#2c2c2c;border:1px solid #252525"></div>
<svg style="left:1864px;top:746px;" width="28" height="27" viewBox="0 0 28 27"><text x="14" y="18" font-family="Liberation Serif" font-style="italic" font-weight="bold" font-size="13" fill="#c4bcbc" text-anchor="middle">fx</text></svg>
<div style="left:1898px;top:746px;width:28px;height:27px;background:#2c2c2c;border:1px solid #252525"></div>
<svg style="left:1898px;top:746px;" width="28" height="27" viewBox="0 0 28 27"><path d="M9,8 H19 V11 H18 L17.5,10 H15 V17 H16.5 V18.5 H11.5 V17 H13 V10 H10.5 L10,11 H9 Z" fill="#c4bcbc"/></svg>
<div style="left:1932px;top:746px;width:28px;height:27px;background:#2c2c2c;border:1px solid #252525"></div>
<svg style="left:1932px;top:746px;" width="28" height="27" viewBox="0 0 28 27"><rect x="8" y="8" width="12" height="12" fill="#c4bcbc"/><path d="M9,9 H19 V13.5 L15.5,16 L12.5,13 L9,15.5 Z" fill="#2c2c2c"/><circle cx="15" cy="11" r="1.1" fill="#c4bcbc"/></svg>
<div style="left:1966px;top:746px;width:28px;height:27px;background:#2c2c2c;border:1px solid #252525"></div>
<svg style="left:1966px;top:746px;" width="28" height="27" viewBox="0 0 28 27"><circle cx="14" cy="13.5" r="5" fill="#c4bcbc"/><circle cx="13" cy="12" r="1.2" fill="#2c2c2c"/></svg>
<div style="left:2000px;top:746px;width:28px;height:27px;background:#2c2c2c;border:1px solid #252525"></div>
<svg style="left:2000px;top:746px;" width="28" height="27" viewBox="0 0 28 27"><path d="M14,8 L19,10.8 V16.5 L14,19.3 L9,16.5 V10.8 Z" fill="#c4bcbc"/><path d="M9.3,11 L14,13.8 L18.7,11" stroke="#2c2c2c" stroke-width="1" fill="none"/></svg>
<div style="left:2034px;top:746px;width:28px;height:27px;background:#2c2c2c;border:1px solid #252525"></div>
<svg style="left:2034px;top:746px;" width="28" height="27" viewBox="0 0 28 27"><rect x="8" y="8" width="12" height="12" fill="#c4bcbc"/><path d="M10,11 H18 M10,13.5 H18 M10,16 H15" stroke="#2c2c2c" stroke-width="1"/></svg>
<div style="left:1529px;top:778px;width:521px;height:28px;background:#727070;"></div>
<span class="t" style="left:1540px;top:785.84px;font-size:12px;color:#f2f2f2;">Inspector</span>
<svg style="left:2005px;top:786px;" width="11" height="11" viewBox="0 0 11 11"><rect x="3.5" y="0.5" width="7" height="6" fill="none" stroke="#3e3d3d" stroke-width="1.2"/><rect x="0.5" y="3.5" width="7" height="7" fill="#727070" stroke="#3e3d3d" stroke-width="1.2"/><rect x="1" y="4" width="6" height="2" fill="#3e3d3d"/></svg>
<svg style="left:2031px;top:787px;" width="10" height="10" viewBox="0 0 10 10"><path d="M0.5,0.5 L9.5,9.5 M9.5,0.5 L0.5,9.5" stroke="#3e3d3d" stroke-width="1.6"/></svg>
<div style="left:1531px;top:806px;width:519px;height:321px;background:#2c2c2c;"></div>
<svg style="left:1538px;top:815px;" width="11" height="13" viewBox="0 0 11 13"><path d="M5.5,0 L11,3 V10 L5.5,13 L0,10 V3 Z" fill="#42a5e2"/><path d="M0.3,3.6 L5.5,6.6 L10.7,3.6" fill="none" stroke="#2c2c2c" stroke-width="1"/></svg>
<span class="t" style="left:1557px;top:815.84px;font-size:12px;color:#eeeeee;">Body_1</span>
<div style="left:1531px;top:840px;width:519px;height:25px;background:#121212;"></div>
<svg style="left:1545px;top:850px;" width="9" height="6" viewBox="0 0 9 6"><path d="M0,0 H8.5 L4.25,5 Z" fill="#c0b9b9"/></svg>
<span class="t" style="left:1561px;top:846.84px;font-size:12px;color:#eeeeee;">Basic Properties</span>
<span class="t" style="left:1585px;top:874.84px;font-size:12px;color:#eeeeee;">Name</span>
<div style="left:1715px;top:869px;width:250px;height:22px;background:#404040;"></div>
<span class="t" style="left:1721px;top:874.84px;font-size:12px;color:#eeeeee;">Body_1</span>
<span class="t" style="left:1585px;top:900.84px;font-size:12px;color:#eeeeee;">Visible</span>
<div style="left:1716px;top:899px;width:14px;height:14px;background:#404040;"></div>
<svg style="left:1716px;top:899px;" width="14" height="14" viewBox="0 0 14 14"><path d="M3,7.5 L5.8,10 L11,4" stroke="#42a5e2" stroke-width="1.5" fill="none"/></svg>
<svg style="left:1544px;top:927.0px;" width="11" height="11" viewBox="0 0 11 11"><circle cx="5.5" cy="5.5" r="4.6" stroke="#b5afaf" stroke-width="1.2" fill="none"/><path d="M5.5,2.8 V5.8 L7.5,7.2" stroke="#b5afaf" stroke-width="1.1" fill="none"/></svg>
<svg style="left:1565px;top:927.0px;" width="11" height="11" viewBox="0 0 11 11"><circle cx="8.5" cy="2.2" r="2" fill="#b5afaf"/><circle cx="2.2" cy="5.5" r="2" fill="#b5afaf"/><circle cx="8.5" cy="8.8" r="2" fill="#b5afaf"/><path d="M8.5,2.2 L2.2,5.5 L8.5,8.8" stroke="#b5afaf" stroke-width="1.1" fill="none"/></svg>
<span class="t" style="left:1585px;top:926.84px;font-size:12px;color:#eeeeee;">Position</span>
<span class="t" style="left:1715px;top:926.84px;font-size:12px;color:#d8322b;">X</span>
<div style="left:1725px;top:921.0px;width:67px;height:22px;background:#404040;"></div>
<span class="t" style="left:1725px;top:926.84px;width:61px;text-align:right;font-size:12px;color:#eeeeee">-0.000</span>
<span class="t" style="left:1802px;top:926.84px;font-size:12px;color:#52b01e;">Y</span>
<div style="left:1812px;top:921.0px;width:67px;height:22px;background:#404040;"></div>
<span class="t" style="left:1812px;top:926.84px;width:61px;text-align:right;font-size:12px;color:#eeeeee">27.193</span>
<span class="t" style="left:1889px;top:926.84px;font-size:12px;color:#2ba0d8;">Z</span>
<div style="left:1899px;top:921.0px;width:67px;height:22px;background:#404040;"></div>
<span class="t" style="left:1899px;top:926.84px;width:61px;text-align:right;font-size:12px;color:#eeeeee">-9.558</span>
<svg style="left:1544px;top:953.0px;" width="11" height="11" viewBox="0 0 11 11"><circle cx="5.5" cy="5.5" r="4.6" stroke="#b5afaf" stroke-width="1.2" fill="none"/><path d="M5.5,2.8 V5.8 L7.5,7.2" stroke="#b5afaf" stroke-width="1.1" fill="none"/></svg>
<svg style="left:1565px;top:953.0px;" width="11" height="11" viewBox="0 0 11 11"><circle cx="8.5" cy="2.2" r="2" fill="#b5afaf"/><circle cx="2.2" cy="5.5" r="2" fill="#b5afaf"/><circle cx="8.5" cy="8.8" r="2" fill="#b5afaf"/><path d="M8.5,2.2 L2.2,5.5 L8.5,8.8" stroke="#b5afaf" stroke-width="1.1" fill="none"/></svg>
<span class="t" style="left:1585px;top:952.84px;font-size:12px;color:#eeeeee;">Rotation</span>
<span class="t" style="left:1715px;top:952.84px;font-size:12px;color:#d8322b;">X</span>
<div style="left:1725px;top:947.0px;width:67px;height:22px;background:#404040;"></div>
<span class="t" style="left:1725px;top:952.84px;width:61px;text-align:right;font-size:12px;color:#eeeeee">0.000</span>
<span class="t" style="left:1802px;top:952.84px;font-size:12px;color:#52b01e;">Y</span>
<div style="left:1812px;top:947.0px;width:67px;height:22px;background:#404040;"></div>
<span class="t" style="left:1812px;top:952.84px;width:61px;text-align:right;font-size:12px;color:#eeeeee">0.000</span>
<span class="t" style="left:1889px;top:952.84px;font-size:12px;color:#2ba0d8;">Z</span>
<div style="left:1899px;top:947.0px;width:67px;height:22px;background:#404040;"></div>
<span class="t" style="left:1899px;top:952.84px;width:61px;text-align:right;font-size:12px;color:#eeeeee">0.000</span>
<svg style="left:1544px;top:979.0px;" width="11" height="11" viewBox="0 0 11 11"><circle cx="5.5" cy="5.5" r="4.6" stroke="#b5afaf" stroke-width="1.2" fill="none"/><path d="M5.5,2.8 V5.8 L7.5,7.2" stroke="#b5afaf" stroke-width="1.1" fill="none"/></svg>
<svg style="left:1565px;top:979.0px;" width="11" height="11" viewBox="0 0 11 11"><circle cx="8.5" cy="2.2" r="2" fill="#b5afaf"/><circle cx="2.2" cy="5.5" r="2" fill="#b5afaf"/><circle cx="8.5" cy="8.8" r="2" fill="#b5afaf"/><path d="M8.5,2.2 L2.2,5.5 L8.5,8.8" stroke="#b5afaf" stroke-width="1.1" fill="none"/></svg>
<span class="t" style="left:1585px;top:978.84px;font-size:12px;color:#eeeeee;">Scale</span>
<span class="t" style="left:1715px;top:978.84px;font-size:12px;color:#d8322b;">X</span>
<div style="left:1725px;top:973.0px;width:67px;height:22px;background:#404040;"></div>
<span class="t" style="left:1725px;top:978.84px;width:61px;text-align:right;font-size:12px;color:#eeeeee">1.000</span>
<span class="t" style="left:1802px;top:978.84px;font-size:12px;color:#52b01e;">Y</span>
<div style="left:1812px;top:973.0px;width:67px;height:22px;background:#404040;"></div>
<span class="t" style="left:1812px;top:978.84px;width:61px;text-align:right;font-size:12px;color:#eeeeee">1.000</span>
<span class="t" style="left:1889px;top:978.84px;font-size:12px;color:#2ba0d8;">Z</span>
<div style="left:1899px;top:973.0px;width:67px;height:22px;background:#404040;"></div>
<span class="t" style="left:1899px;top:978.84px;width:61px;text-align:right;font-size:12px;color:#eeeeee">1.000</span>
<svg style="left:1544px;top:1005.0px;" width="11" height="11" viewBox="0 0 11 11"><circle cx="5.5" cy="5.5" r="4.6" stroke="#b5afaf" stroke-width="1.2" fill="none"/><path d="M5.5,2.8 V5.8 L7.5,7.2" stroke="#b5afaf" stroke-width="1.1" fill="none"/></svg>
<svg style="left:1565px;top:1005.0px;" width="11" height="11" viewBox="0 0 11 11"><circle cx="8.5" cy="2.2" r="2" fill="#b5afaf"/><circle cx="2.2" cy="5.5" r="2" fill="#b5afaf"/><circle cx="8.5" cy="8.8" r="2" fill="#b5afaf"/><path d="M8.5,2.2 L2.2,5.5 L8.5,8.8" stroke="#b5afaf" stroke-width="1.1" fill="none"/></svg>
<span class="t" style="left:1585px;top:1004.84px;font-size:12px;color:#eeeeee;">Pivot</span>
<span class="t" style="left:1715px;top:1004.84px;font-size:12px;color:#d8322b;">X</span>
<div style="left:1725px;top:999.0px;width:67px;height:22px;background:#404040;"></div>
<span class="t" style="left:1725px;top:1004.84px;width:61px;text-align:right;font-size:12px;color:#eeeeee">0.000</span>
<span class="t" style="left:1802px;top:1004.84px;font-size:12px;color:#52b01e;">Y</span>
<div style="left:1812px;top:999.0px;width:67px;height:22px;background:#404040;"></div>
<span class="t" style="left:1812px;top:1004.84px;width:61px;text-align:right;font-size:12px;color:#eeeeee">0.000</span>
<span class="t" style="left:1889px;top:1004.84px;font-size:12px;color:#2ba0d8;">Z</span>
<div style="left:1899px;top:999.0px;width:67px;height:22px;background:#404040;"></div>
<span class="t" style="left:1899px;top:1004.84px;width:61px;text-align:right;font-size:12px;color:#eeeeee">0.000</span>
<svg style="left:1544px;top:1031.0px;" width="11" height="11" viewBox="0 0 11 11"><circle cx="5.5" cy="5.5" r="4.6" stroke="#b5afaf" stroke-width="1.2" fill="none"/><path d="M5.5,2.8 V5.8 L7.5,7.2" stroke="#b5afaf" stroke-width="1.1" fill="none"/></svg>
<svg style="left:1565px;top:1031.0px;" width="11" height="11" viewBox="0 0 11 11"><circle cx="8.5" cy="2.2" r="2" fill="#b5afaf"/><circle cx="2.2" cy="5.5" r="2" fill="#b5afaf"/><circle cx="8.5" cy="8.8" r="2" fill="#b5afaf"/><path d="M8.5,2.2 L2.2,5.5 L8.5,8.8" stroke="#b5afaf" stroke-width="1.1" fill="none"/></svg>
<span class="t" style="left:1585px;top:1030.84px;font-size:12px;color:#eeeeee;">Opacity</span>
<div style="left:1715px;top:1033.5px;width:190px;height:5px;background:#404040;border-radius:2px"></div>
<div style="left:1899px;top:1030.5px;width:6px;height:12px;background:#a39e9e;border-radius:2px"></div>
<div style="left:1910px;top:1025.0px;width:55px;height:22px;background:#404040;"></div>
<span class="t" style="left:1910px;top:1030.84px;width:49px;text-align:right;font-size:12px;color:#eeeeee">100</span>
<div style="left:1531px;top:1053px;width:519px;height:25px;background:#121212;"></div>
<svg style="left:1545px;top:1063px;" width="9" height="6" viewBox="0 0 9 6"><path d="M0,0 H8.5 L4.25,5 Z" fill="#c0b9b9"/></svg>
<span class="t" style="left:1561px;top:1060.84px;font-size:12px;color:#eeeeee;">Variant Tags</span>
<div style="left:1900px;top:1082px;width:70px;height:20px;background:#8a8686;"></div>
<span class="t" style="left:1911px;top:1086.84px;font-size:12px;color:#151515;">Import...</span>
<div style="left:1975px;top:1082px;width:70px;height:20px;background:#8a8686;"></div>
<span class="t" style="left:1986px;top:1086.84px;font-size:12px;color:#6a6666;">Export...</span>
<div style="left:1531px;top:1114px;width:519px;height:4px;overflow:hidden"><span class="t" style="left:10px;top:0.5px;font-size:12px;color:#eeeeee;position:absolute">There are no variant tags yet. Click [+] to add a new tag group and start adding tags.</span></div>
<div style="left:2050px;top:778px;width:10px;height:349px;background:#2e2d2e;"></div>
<div style="left:2050px;top:778px;width:10px;height:63px;background:#333233;"></div>
<span class="t" style="left:2052px;top:782px;font-size:12px;color:#f2f2f2;writing-mode:vertical-rl;">Inspector</span>
<div style="left:2050px;top:841px;width:10px;height:46px;background:#282828;"></div>
<span class="t" style="left:2052px;top:846px;font-size:12px;color:#8a8686;writing-mode:vertical-rl;">Action</span>
<div style="left:2050px;top:887px;width:1px;height:240px;background:#a39e9e;"></div>
<div style="left:2050px;top:778px;width:10px;height:349px;overflow:hidden;position:absolute"></div>
<div style="left:0px;top:789px;width:1529px;height:28px;background:#727070;"></div>
<span class="t" style="left:10px;top:796.84px;font-size:12px;color:#f2f2f2;">Timeline</span>
<svg style="left:1483px;top:797px;" width="11" height="11" viewBox="0 0 11 11"><rect x="3.5" y="0.5" width="7" height="6" fill="none" stroke="#3e3d3d" stroke-width="1.2"/><rect x="0.5" y="3.5" width="7" height="7" fill="#727070" stroke="#3e3d3d" stroke-width="1.2"/><rect x="1" y="4" width="6" height="2" fill="#3e3d3d"/></svg>
<svg style="left:1510px;top:798px;" width="10" height="10" viewBox="0 0 10 10"><path d="M0.5,0.5 L9.5,9.5 M9.5,0.5 L0.5,9.5" stroke="#3e3d3d" stroke-width="1.6"/></svg>
<div style="left:0px;top:817px;width:1529px;height:20px;background:#2c2c2c;"></div>
<svg style="left:193px;top:820px;" width="12" height="12" viewBox="0 0 12 12"><path d="M1,6 Q6,0.5 11,6 Q6,11.5 1,6 Z" fill="#8a8686"/><path d="M2,11 L10.5,1.5" stroke="#2c2c2c" stroke-width="1.6"/><path d="M2,11 L10.5,1.5" stroke="#8a8686" stroke-width="0.8"/></svg>
<svg style="left:210px;top:821px;" width="12" height="10" viewBox="0 0 12 10"><path d="M0.8,5 Q6,-0.5 11.2,5 Q6,10.5 0.8,5 Z" fill="none" stroke="#c4bcbc" stroke-width="1.1"/><ellipse cx="6" cy="5" rx="1.6" ry="3" fill="#c4bcbc"/></svg>
<svg style="left:230px;top:820px;" width="9" height="12" viewBox="0 0 9 12"><path d="M2,5.5 V3.5 A2.5,2.5 0 0 1 7,3.5 V5.5" stroke="#c4bcbc" stroke-width="1.1" fill="none"/><rect x="1" y="5.5" width="7" height="6" fill="#c4bcbc"/></svg>
<div style="left:254px;top:817px;width:1269px;height:20px;background:#2c2c2c;"></div>
<svg style="left:0px;top:817px;" width="1529" height="20" viewBox="0 0 1529 20"></svg>
<svg style="left:0px;top:0px" width="1529" height="1128" viewBox="0 0 1529 1128"><rect x="269.0" y="832" width="1" height="4" fill="#a8a4a4"/><rect x="299.0" y="834" width="1" height="2" fill="#a8a4a4"/><rect x="328.9" y="833" width="1" height="3" fill="#a8a4a4"/><rect x="358.9" y="834" width="1" height="2" fill="#a8a4a4"/><rect x="388.9" y="832" width="1" height="4" fill="#a8a4a4"/><rect x="418.9" y="834" width="1" height="2" fill="#a8a4a4"/><rect x="448.9" y="833" width="1" height="3" fill="#a8a4a4"/><rect x="478.8" y="834" width="1" height="2" fill="#a8a4a4"/><rect x="508.8" y="832" width="1" height="4" fill="#a8a4a4"/><rect x="538.8" y="834" width="1" height="2" fill="#a8a4a4"/><rect x="568.8" y="833" width="1" height="3" fill="#a8a4a4"/><rect x="598.7" y="834" width="1" height="2" fill="#a8a4a4"/><rect x="628.7" y="832" width="1" height="4" fill="#a8a4a4"/><rect x="658.7" y="834" width="1" height="2" fill="#a8a4a4"/><rect x="688.7" y="833" width="1" height="3" fill="#a8a4a4"/><rect x="718.6" y="834" width="1" height="2" fill="#a8a4a4"/><rect x="748.6" y="832" width="1" height="4" fill="#a8a4a4"/><rect x="778.6" y="834" width="1" height="2" fill="#a8a4a4"/><rect x="808.6" y="833" width="1" height="3" fill="#a8a4a4"/><rect x="838.5" y="834" width="1" height="2" fill="#a8a4a4"/><rect x="868.5" y="832" width="1" height="4" fill="#a8a4a4"/><rect x="898.5" y="834" width="1" height="2" fill="#5e5c5c"/><rect x="928.5" y="833" width="1" height="3" fill="#5e5c5c"/><rect x="958.4" y="834" width="1" height="2" fill="#5e5c5c"/><rect x="988.4" y="832" width="1" height="4" fill="#5e5c5c"/><rect x="1018.4" y="834" width="1" height="2" fill="#5e5c5c"/><rect x="1048.3" y="833" width="1" height="3" fill="#5e5c5c"/><rect x="1078.3" y="834" width="1" height="2" fill="#5e5c5c"/><rect x="1108.3" y="832" width="1" height="4" fill="#5e5c5c"/><rect x="1138.3" y="834" width="1" height="2" fill="#5e5c5c"/><rect x="1168.2" y="833" width="1" height="3" fill="#5e5c5c"/><rect x="1198.2" y="834" width="1" height="2" fill="#5e5c5c"/><rect x="1228.2" y="832" width="1" height="4" fill="#5e5c5c"/><rect x="1258.2" y="834" width="1" height="2" fill="#5e5c5c"/><rect x="1288.2" y="833" width="1" height="3" fill="#5e5c5c"/><rect x="1318.1" y="834" width="1" height="2" fill="#5e5c5c"/><rect x="1348.1" y="832" width="1" height="4" fill="#5e5c5c"/><rect x="1378.1" y="834" width="1" height="2" fill="#5e5c5c"/><rect x="1408.0" y="833" width="1" height="3" fill="#5e5c5c"/><rect x="1438.0" y="834" width="1" height="2" fill="#5e5c5c"/><rect x="1468.0" y="832" width="1" height="4" fill="#5e5c5c"/><rect x="1498.0" y="834" width="1" height="2" fill="#5e5c5c"/><rect x="269" y="835" width="1254" height="1" fill="#5e5c5c"/><rect x="269" y="835" width="599" height="1" fill="#a8a4a4"/></svg>
<span class="t" style="left:348.9px;top:817.84px;width:80px;text-align:center;font-size:12px;color:#a8a4a4">2.000</span>
<span class="t" style="left:468.8px;top:817.84px;width:80px;text-align:center;font-size:12px;color:#a8a4a4">4.000</span>
<span class="t" style="left:588.7px;top:817.84px;width:80px;text-align:center;font-size:12px;color:#a8a4a4">6.000</span>
<span class="t" style="left:708.6px;top:817.84px;width:80px;text-align:center;font-size:12px;color:#a8a4a4">8.000</span>
<span class="t" style="left:828.5px;top:817.84px;width:80px;text-align:center;font-size:12px;color:#a8a4a4">10.000</span>
<span class="t" style="left:948.4px;top:817.84px;width:80px;text-align:center;font-size:12px;color:#545252">12.000</span>
<span class="t" style="left:1068.3px;top:817.84px;width:80px;text-align:center;font-size:12px;color:#545252">14.000</span>
<span class="t" style="left:1188.2px;top:817.84px;width:80px;text-align:center;font-size:12px;color:#545252">16.000</span>
<span class="t" style="left:1308.1px;top:817.84px;width:80px;text-align:center;font-size:12px;color:#545252">18.000</span>
<span class="t" style="left:1428.0px;top:817.84px;width:80px;text-align:center;font-size:12px;color:#545252">20.000</span>
<div style="left:0px;top:837px;width:1523px;height:256px;background:#2b2b2b;"></div>
<div style="left:0px;top:837px;width:18px;height:19px;background:#403e3f;"></div>
<div style="left:19px;top:837px;width:172px;height:19px;background:#403e3f;"></div>
<div style="left:192px;top:837px;width:52px;height:19px;background:#403e3f;"></div>
<div style="left:254px;top:837px;width:1269px;height:19px;background:#403e3f;"></div>
<div style="left:244px;top:837px;width:10px;height:19px;background:#2c2c2c;"></div>
<svg style="left:24px;top:845px;" width="9" height="6" viewBox="0 0 9 6"><path d="M0,0 H8.5 L4.25,5 Z" fill="#c0b9b9"/></svg>
<svg style="left:39px;top:841px;" width="11" height="12" viewBox="0 0 11 12"><path d="M0,3 L10.5,0.5 V2.5 L0,5 Z" fill="#9ea5ea"/><rect x="0" y="6" width="10.5" height="5.5" fill="#9ea5ea"/></svg>
<div style="left:54px;top:837px;width:137px;height:19px;overflow:hidden"><span class="t" style="position:absolute;left:0;top:5.84px;font-size:12px;color:#eeeeee">Scene</span></div>
<div style="left:0px;top:857px;width:18px;height:19px;background:#403e3f;"></div>
<div style="left:19px;top:857px;width:172px;height:19px;background:#403e3f;"></div>
<div style="left:192px;top:857px;width:52px;height:19px;background:#403e3f;"></div>
<div style="left:254px;top:857px;width:1269px;height:19px;background:#403e3f;"></div>
<div style="left:244px;top:857px;width:10px;height:19px;background:#2c2c2c;"></div>
<svg style="left:39px;top:865px;" width="9" height="6" viewBox="0 0 9 6"><path d="M0,0 H8.5 L4.25,5 Z" fill="#c0b9b9"/></svg>
<svg style="left:54px;top:861px;" width="11" height="11" viewBox="0 0 11 11"><rect x="0" y="0" width="10.5" height="10.5" fill="#9ea5ea"/><path d="M5,10.5 L10.5,5 V10.5 Z" fill="#403e3f"/><path d="M6.5,10.5 L10.5,6.5 V10.5 Z" fill="#9ea5ea"/></svg>
<div style="left:69px;top:857px;width:122px;height:19px;overflow:hidden"><span class="t" style="position:absolute;left:0;top:5.84px;font-size:12px;color:#52b01e">Layer</span></div>
<svg style="left:197px;top:864px;" width="6" height="6" viewBox="0 0 6 6"><rect x="0" y="0" width="5" height="5" fill="#222" opacity="0.6"/><path d="M1.5,5.5 H5.5 V1.5" stroke="#8a8686" stroke-width="1" fill="none"/></svg>
<svg style="left:232px;top:864px;" width="6" height="6" viewBox="0 0 6 6"><rect x="0" y="0" width="5" height="5" fill="#222" opacity="0.6"/><path d="M1.5,5.5 H5.5 V1.5" stroke="#8a8686" stroke-width="1" fill="none"/></svg>
<svg style="left:210px;top:862px;" width="12" height="10" viewBox="0 0 12 10"><path d="M0.8,5 Q6,-0.5 11.2,5 Q6,10.5 0.8,5 Z" fill="none" stroke="#c4bcbc" stroke-width="1.1"/><ellipse cx="6" cy="5" rx="1.6" ry="3" fill="#c4bcbc"/></svg>
<div style="left:270px;top:857px;width:598px;height:19px;background:#e8d9c5;"></div>
<div style="left:868px;top:857px;width:2px;height:20px;background:#111;"></div>
<div style="left:0px;top:877px;width:18px;height:19px;background:#403e3f;"></div>
<div style="left:19px;top:877px;width:172px;height:19px;background:#403e3f;"></div>
<div style="left:192px;top:877px;width:52px;height:19px;background:#403e3f;"></div>
<div style="left:254px;top:877px;width:1269px;height:19px;background:#403e3f;"></div>
<div style="left:244px;top:877px;width:10px;height:19px;background:#2c2c2c;"></div>
<svg style="left:54px;top:885px;" width="9" height="6" viewBox="0 0 9 6"><path d="M0,0 H8.5 L4.25,5 Z" fill="#c0b9b9"/></svg>
<svg style="left:69px;top:881px;" width="12" height="12" viewBox="0 0 12 12"><path d="M0,2.5 L4,4 V12 L0,10.5 Z M4.5,2 L7,1 V9.5 L4.5,10.5 Z M7.5,1 L10.5,0 V8 L7.5,9 Z" fill="#f4b400"/></svg>
<div style="left:84px;top:877px;width:107px;height:19px;overflow:hidden"><span class="t" style="position:absolute;left:0;top:5.84px;font-size:12px;color:#eeeeee">Cartoon_car</span></div>
<svg style="left:197px;top:884px;" width="6" height="6" viewBox="0 0 6 6"><rect x="0" y="0" width="5" height="5" fill="#222" opacity="0.6"/><path d="M1.5,5.5 H5.5 V1.5" stroke="#8a8686" stroke-width="1" fill="none"/></svg>
<svg style="left:232px;top:884px;" width="6" height="6" viewBox="0 0 6 6"><rect x="0" y="0" width="5" height="5" fill="#222" opacity="0.6"/><path d="M1.5,5.5 H5.5 V1.5" stroke="#8a8686" stroke-width="1" fill="none"/></svg>
<svg style="left:210px;top:882px;" width="12" height="10" viewBox="0 0 12 10"><path d="M0.8,5 Q6,-0.5 11.2,5 Q6,10.5 0.8,5 Z" fill="none" stroke="#c4bcbc" stroke-width="1.1"/><ellipse cx="6" cy="5" rx="1.6" ry="3" fill="#c4bcbc"/></svg>
<div style="left:270px;top:877px;width:598px;height:19px;background:#7a86bd;"></div>
<div style="left:868px;top:876px;width:2px;height:20px;background:#111;"></div>
<div style="left:0px;top:897px;width:18px;height:19px;background:#403e3f;"></div>
<div style="left:19px;top:897px;width:172px;height:19px;background:#403e3f;"></div>
<div style="left:192px;top:897px;width:52px;height:19px;background:#403e3f;"></div>
<div style="left:254px;top:897px;width:1269px;height:19px;background:#403e3f;"></div>
<div style="left:244px;top:897px;width:10px;height:19px;background:#2c2c2c;"></div>
<svg style="left:70px;top:903px;" width="6" height="9" viewBox="0 0 6 9"><path d="M0,0 L5.5,4.5 L0,9 Z" fill="#c0b9b9"/></svg>
<svg style="left:83px;top:900px;" width="11" height="13" viewBox="0 0 11 13"><path d="M5.5,0 L11,3 V10 L5.5,13 L0,10 V3 Z" fill="#42a5e2"/><path d="M0.3,3.6 L5.5,6.6 L10.7,3.6" fill="none" stroke="#403e3f" stroke-width="1"/></svg>
<div style="left:99px;top:897px;width:92px;height:19px;overflow:hidden"><span class="t" style="position:absolute;left:0;top:5.84px;font-size:12px;color:#eeeeee">Exhaust_pipe_1</span></div>
<svg style="left:197px;top:904px;" width="6" height="6" viewBox="0 0 6 6"><rect x="0" y="0" width="5" height="5" fill="#222" opacity="0.6"/><path d="M1.5,5.5 H5.5 V1.5" stroke="#8a8686" stroke-width="1" fill="none"/></svg>
<svg style="left:232px;top:904px;" width="6" height="6" viewBox="0 0 6 6"><rect x="0" y="0" width="5" height="5" fill="#222" opacity="0.6"/><path d="M1.5,5.5 H5.5 V1.5" stroke="#8a8686" stroke-width="1" fill="none"/></svg>
<svg style="left:210px;top:902px;" width="12" height="10" viewBox="0 0 12 10"><path d="M0.8,5 Q6,-0.5 11.2,5 Q6,10.5 0.8,5 Z" fill="none" stroke="#c4bcbc" stroke-width="1.1"/><ellipse cx="6" cy="5" rx="1.6" ry="3" fill="#c4bcbc"/></svg>
<div style="left:270px;top:897px;width:598px;height:19px;background:#7a86bd;"></div>
<div style="left:868px;top:896px;width:2px;height:20px;background:#111;"></div>
<div style="left:0px;top:917px;width:18px;height:19px;background:#403e3f;"></div>
<div style="left:19px;top:917px;width:172px;height:19px;background:#403e3f;"></div>
<div style="left:192px;top:917px;width:52px;height:19px;background:#403e3f;"></div>
<div style="left:254px;top:917px;width:1269px;height:19px;background:#403e3f;"></div>
<div style="left:244px;top:917px;width:10px;height:19px;background:#2c2c2c;"></div>
<svg style="left:70px;top:923px;" width="6" height="9" viewBox="0 0 6 9"><path d="M0,0 L5.5,4.5 L0,9 Z" fill="#c0b9b9"/></svg>
<svg style="left:83px;top:920px;" width="11" height="13" viewBox="0 0 11 13"><path d="M5.5,0 L11,3 V10 L5.5,13 L0,10 V3 Z" fill="#42a5e2"/><path d="M0.3,3.6 L5.5,6.6 L10.7,3.6" fill="none" stroke="#403e3f" stroke-width="1"/></svg>
<div style="left:99px;top:917px;width:92px;height:19px;overflow:hidden"><span class="t" style="position:absolute;left:0;top:5.84px;font-size:12px;color:#eeeeee">Air_Intake</span></div>
<svg style="left:197px;top:924px;" width="6" height="6" viewBox="0 0 6 6"><rect x="0" y="0" width="5" height="5" fill="#222" opacity="0.6"/><path d="M1.5,5.5 H5.5 V1.5" stroke="#8a8686" stroke-width="1" fill="none"/></svg>
<svg style="left:232px;top:924px;" width="6" height="6" viewBox="0 0 6 6"><rect x="0" y="0" width="5" height="5" fill="#222" opacity="0.6"/><path d="M1.5,5.5 H5.5 V1.5" stroke="#8a8686" stroke-width="1" fill="none"/></svg>
<svg style="left:210px;top:922px;" width="12" height="10" viewBox="0 0 12 10"><path d="M0.8,5 Q6,-0.5 11.2,5 Q6,10.5 0.8,5 Z" fill="none" stroke="#c4bcbc" stroke-width="1.1"/><ellipse cx="6" cy="5" rx="1.6" ry="3" fill="#c4bcbc"/></svg>
<div style="left:270px;top:917px;width:598px;height:19px;background:#7a86bd;"></div>
<div style="left:868px;top:916px;width:2px;height:20px;background:#111;"></div>
<div style="left:0px;top:937px;width:18px;height:19px;background:#31609a;"></div>
<div style="left:19px;top:937px;width:172px;height:19px;background:#31609a;"></div>
<div style="left:192px;top:937px;width:52px;height:19px;background:#31609a;"></div>
<div style="left:254px;top:937px;width:1269px;height:19px;background:#31609a;"></div>
<div style="left:244px;top:937px;width:10px;height:19px;background:#2c2c2c;"></div>
<svg style="left:70px;top:943px;" width="6" height="9" viewBox="0 0 6 9"><path d="M0,0 L5.5,4.5 L0,9 Z" fill="#c0b9b9"/></svg>
<svg style="left:83px;top:940px;" width="11" height="13" viewBox="0 0 11 13"><path d="M5.5,0 L11,3 V10 L5.5,13 L0,10 V3 Z" fill="#42a5e2"/><path d="M0.3,3.6 L5.5,6.6 L10.7,3.6" fill="none" stroke="#31609a" stroke-width="1"/></svg>
<div style="left:99px;top:937px;width:92px;height:19px;overflow:hidden"><span class="t" style="position:absolute;left:0;top:5.84px;font-size:12px;color:#eeeeee">Body_1</span></div>
<svg style="left:197px;top:944px;" width="6" height="6" viewBox="0 0 6 6"><rect x="0" y="0" width="5" height="5" fill="#222" opacity="0.6"/><path d="M1.5,5.5 H5.5 V1.5" stroke="#8a8686" stroke-width="1" fill="none"/></svg>
<svg style="left:232px;top:944px;" width="6" height="6" viewBox="0 0 6 6"><rect x="0" y="0" width="5" height="5" fill="#222" opacity="0.6"/><path d="M1.5,5.5 H5.5 V1.5" stroke="#8a8686" stroke-width="1" fill="none"/></svg>
<svg style="left:210px;top:942px;" width="12" height="10" viewBox="0 0 12 10"><path d="M0.8,5 Q6,-0.5 11.2,5 Q6,10.5 0.8,5 Z" fill="none" stroke="#c4bcbc" stroke-width="1.1"/><ellipse cx="6" cy="5" rx="1.6" ry="3" fill="#c4bcbc"/></svg>
<div style="left:270px;top:937px;width:598px;height:19px;background:#7a86bd;"></div>
<div style="left:270px;top:940px;width:598px;height:13px;background:#3b3f5c;"></div>
<div style="left:868px;top:936px;width:2px;height:20px;background:#111;"></div>
<div style="left:0px;top:957px;width:18px;height:19px;background:#403e3f;"></div>
<div style="left:19px;top:957px;width:172px;height:19px;background:#403e3f;"></div>
<div style="left:192px;top:957px;width:52px;height:19px;background:#403e3f;"></div>
<div style="left:254px;top:957px;width:1269px;height:19px;background:#403e3f;"></div>
<div style="left:244px;top:957px;width:10px;height:19px;background:#2c2c2c;"></div>
<svg style="left:70px;top:963px;" width="6" height="9" viewBox="0 0 6 9"><path d="M0,0 L5.5,4.5 L0,9 Z" fill="#c0b9b9"/></svg>
<svg style="left:83px;top:960px;" width="11" height="13" viewBox="0 0 11 13"><path d="M5.5,0 L11,3 V10 L5.5,13 L0,10 V3 Z" fill="#42a5e2"/><path d="M0.3,3.6 L5.5,6.6 L10.7,3.6" fill="none" stroke="#403e3f" stroke-width="1"/></svg>
<div style="left:99px;top:957px;width:92px;height:19px;overflow:hidden"><span class="t" style="position:absolute;left:0;top:5.84px;font-size:12px;color:#eeeeee">Head_lights_Chrome</span></div>
<svg style="left:197px;top:964px;" width="6" height="6" viewBox="0 0 6 6"><rect x="0" y="0" width="5" height="5" fill="#222" opacity="0.6"/><path d="M1.5,5.5 H5.5 V1.5" stroke="#8a8686" stroke-width="1" fill="none"/></svg>
<svg style="left:232px;top:964px;" width="6" height="6" viewBox="0 0 6 6"><rect x="0" y="0" width="5" height="5" fill="#222" opacity="0.6"/><path d="M1.5,5.5 H5.5 V1.5" stroke="#8a8686" stroke-width="1" fill="none"/></svg>
<svg style="left:210px;top:962px;" width="12" height="10" viewBox="0 0 12 10"><path d="M0.8,5 Q6,-0.5 11.2,5 Q6,10.5 0.8,5 Z" fill="none" stroke="#c4bcbc" stroke-width="1.1"/><ellipse cx="6" cy="5" rx="1.6" ry="3" fill="#c4bcbc"/></svg>
<div style="left:270px;top:957px;width:598px;height:19px;background:#7a86bd;"></div>
<div style="left:868px;top:956px;width:2px;height:20px;background:#111;"></div>
<div style="left:0px;top:977px;width:18px;height:19px;background:#403e3f;"></div>
<div style="left:19px;top:977px;width:172px;height:19px;background:#403e3f;"></div>
<div style="left:192px;top:977px;width:52px;height:19px;background:#403e3f;"></div>
<div style="left:254px;top:977px;width:1269px;height:19px;background:#403e3f;"></div>
<div style="left:244px;top:977px;width:10px;height:19px;background:#2c2c2c;"></div>
<svg style="left:70px;top:983px;" width="6" height="9" viewBox="0 0 6 9"><path d="M0,0 L5.5,4.5 L0,9 Z" fill="#c0b9b9"/></svg>
<svg style="left:83px;top:980px;" width="11" height="13" viewBox="0 0 11 13"><path d="M5.5,0 L11,3 V10 L5.5,13 L0,10 V3 Z" fill="#42a5e2"/><path d="M0.3,3.6 L5.5,6.6 L10.7,3.6" fill="none" stroke="#403e3f" stroke-width="1"/></svg>
<div style="left:99px;top:977px;width:92px;height:19px;overflow:hidden"><span class="t" style="position:absolute;left:0;top:5.84px;font-size:12px;color:#eeeeee">Interior_Velvet_Leather</span></div>
<svg style="left:197px;top:984px;" width="6" height="6" viewBox="0 0 6 6"><rect x="0" y="0" width="5" height="5" fill="#222" opacity="0.6"/><path d="M1.5,5.5 H5.5 V1.5" stroke="#8a8686" stroke-width="1" fill="none"/></svg>
<svg style="left:232px;top:984px;" width="6" height="6" viewBox="0 0 6 6"><rect x="0" y="0" width="5" height="5" fill="#222" opacity="0.6"/><path d="M1.5,5.5 H5.5 V1.5" stroke="#8a8686" stroke-width="1" fill="none"/></svg>
<svg style="left:210px;top:982px;" width="12" height="10" viewBox="0 0 12 10"><path d="M0.8,5 Q6,-0.5 11.2,5 Q6,10.5 0.8,5 Z" fill="none" stroke="#c4bcbc" stroke-width="1.1"/><ellipse cx="6" cy="5" rx="1.6" ry="3" fill="#c4bcbc"/></svg>
<div style="left:270px;top:977px;width:598px;height:19px;background:#7a86bd;"></div>
<div style="left:868px;top:976px;width:2px;height:20px;background:#111;"></div>
<div style="left:0px;top:997px;width:18px;height:19px;background:#403e3f;"></div>
<div style="left:19px;top:997px;width:172px;height:19px;background:#403e3f;"></div>
<div style="left:192px;top:997px;width:52px;height:19px;background:#403e3f;"></div>
<div style="left:254px;top:997px;width:1269px;height:19px;background:#403e3f;"></div>
<div style="left:244px;top:997px;width:10px;height:19px;background:#2c2c2c;"></div>
<svg style="left:70px;top:1003px;" width="6" height="9" viewBox="0 0 6 9"><path d="M0,0 L5.5,4.5 L0,9 Z" fill="#c0b9b9"/></svg>
<svg style="left:83px;top:1000px;" width="11" height="13" viewBox="0 0 11 13"><path d="M5.5,0 L11,3 V10 L5.5,13 L0,10 V3 Z" fill="#42a5e2"/><path d="M0.3,3.6 L5.5,6.6 L10.7,3.6" fill="none" stroke="#403e3f" stroke-width="1"/></svg>
<div style="left:99px;top:997px;width:92px;height:19px;overflow:hidden"><span class="t" style="position:absolute;left:0;top:5.84px;font-size:12px;color:#eeeeee">Glass_Frame</span></div>
<svg style="left:197px;top:1004px;" width="6" height="6" viewBox="0 0 6 6"><rect x="0" y="0" width="5" height="5" fill="#222" opacity="0.6"/><path d="M1.5,5.5 H5.5 V1.5" stroke="#8a8686" stroke-width="1" fill="none"/></svg>
<svg style="left:232px;top:1004px;" width="6" height="6" viewBox="0 0 6 6"><rect x="0" y="0" width="5" height="5" fill="#222" opacity="0.6"/><path d="M1.5,5.5 H5.5 V1.5" stroke="#8a8686" stroke-width="1" fill="none"/></svg>
<svg style="left:210px;top:1002px;" width="12" height="10" viewBox="0 0 12 10"><path d="M0.8,5 Q6,-0.5 11.2,5 Q6,10.5 0.8,5 Z" fill="none" stroke="#c4bcbc" stroke-width="1.1"/><ellipse cx="6" cy="5" rx="1.6" ry="3" fill="#c4bcbc"/></svg>
<div style="left:270px;top:997px;width:598px;height:19px;background:#7a86bd;"></div>
<div style="left:868px;top:996px;width:2px;height:20px;background:#111;"></div>
<div style="left:0px;top:1017px;width:18px;height:19px;background:#403e3f;"></div>
<div style="left:19px;top:1017px;width:172px;height:19px;background:#403e3f;"></div>
<div style="left:192px;top:1017px;width:52px;height:19px;background:#403e3f;"></div>
<div style="left:254px;top:1017px;width:1269px;height:19px;background:#403e3f;"></div>
<div style="left:244px;top:1017px;width:10px;height:19px;background:#2c2c2c;"></div>
<svg style="left:70px;top:1023px;" width="6" height="9" viewBox="0 0 6 9"><path d="M0,0 L5.5,4.5 L0,9 Z" fill="#c0b9b9"/></svg>
<svg style="left:83px;top:1020px;" width="11" height="13" viewBox="0 0 11 13"><path d="M5.5,0 L11,3 V10 L5.5,13 L0,10 V3 Z" fill="#42a5e2"/><path d="M0.3,3.6 L5.5,6.6 L10.7,3.6" fill="none" stroke="#403e3f" stroke-width="1"/></svg>
<div style="left:99px;top:1017px;width:92px;height:19px;overflow:hidden"><span class="t" style="position:absolute;left:0;top:5.84px;font-size:12px;color:#eeeeee">Windshield</span></div>
<svg style="left:197px;top:1024px;" width="6" height="6" viewBox="0 0 6 6"><rect x="0" y="0" width="5" height="5" fill="#222" opacity="0.6"/><path d="M1.5,5.5 H5.5 V1.5" stroke="#8a8686" stroke-width="1" fill="none"/></svg>
<svg style="left:232px;top:1024px;" width="6" height="6" viewBox="0 0 6 6"><rect x="0" y="0" width="5" height="5" fill="#222" opacity="0.6"/><path d="M1.5,5.5 H5.5 V1.5" stroke="#8a8686" stroke-width="1" fill="none"/></svg>
<svg style="left:210px;top:1022px;" width="12" height="10" viewBox="0 0 12 10"><path d="M0.8,5 Q6,-0.5 11.2,5 Q6,10.5 0.8,5 Z" fill="none" stroke="#c4bcbc" stroke-width="1.1"/><ellipse cx="6" cy="5" rx="1.6" ry="3" fill="#c4bcbc"/></svg>
<div style="left:270px;top:1017px;width:598px;height:19px;background:#7a86bd;"></div>
<div style="left:868px;top:1016px;width:2px;height:20px;background:#111;"></div>
<div style="left:0px;top:1037px;width:18px;height:19px;background:#403e3f;"></div>
<div style="left:19px;top:1037px;width:172px;height:19px;background:#403e3f;"></div>
<div style="left:192px;top:1037px;width:52px;height:19px;background:#403e3f;"></div>
<div style="left:254px;top:1037px;width:1269px;height:19px;background:#403e3f;"></div>
<div style="left:244px;top:1037px;width:10px;height:19px;background:#2c2c2c;"></div>
<svg style="left:70px;top:1043px;" width="6" height="9" viewBox="0 0 6 9"><path d="M0,0 L5.5,4.5 L0,9 Z" fill="#c0b9b9"/></svg>
<svg style="left:83px;top:1040px;" width="11" height="13" viewBox="0 0 11 13"><path d="M5.5,0 L11,3 V10 L5.5,13 L0,10 V3 Z" fill="#42a5e2"/><path d="M0.3,3.6 L5.5,6.6 L10.7,3.6" fill="none" stroke="#403e3f" stroke-width="1"/></svg>
<div style="left:99px;top:1037px;width:92px;height:19px;overflow:hidden"><span class="t" style="position:absolute;left:0;top:5.84px;font-size:12px;color:#eeeeee">Sun_Visor</span></div>
<svg style="left:197px;top:1044px;" width="6" height="6" viewBox="0 0 6 6"><rect x="0" y="0" width="5" height="5" fill="#222" opacity="0.6"/><path d="M1.5,5.5 H5.5 V1.5" stroke="#8a8686" stroke-width="1" fill="none"/></svg>
<svg style="left:232px;top:1044px;" width="6" height="6" viewBox="0 0 6 6"><rect x="0" y="0" width="5" height="5" fill="#222" opacity="0.6"/><path d="M1.5,5.5 H5.5 V1.5" stroke="#8a8686" stroke-width="1" fill="none"/></svg>
<svg style="left:210px;top:1042px;" width="12" height="10" viewBox="0 0 12 10"><path d="M0.8,5 Q6,-0.5 11.2,5 Q6,10.5 0.8,5 Z" fill="none" stroke="#c4bcbc" stroke-width="1.1"/><ellipse cx="6" cy="5" rx="1.6" ry="3" fill="#c4bcbc"/></svg>
<div style="left:270px;top:1037px;width:598px;height:19px;background:#7a86bd;"></div>
<div style="left:868px;top:1036px;width:2px;height:20px;background:#111;"></div>
<div style="left:0px;top:1057px;width:18px;height:19px;background:#403e3f;"></div>
<div style="left:19px;top:1057px;width:172px;height:19px;background:#403e3f;"></div>
<div style="left:192px;top:1057px;width:52px;height:19px;background:#403e3f;"></div>
<div style="left:254px;top:1057px;width:1269px;height:19px;background:#403e3f;"></div>
<div style="left:244px;top:1057px;width:10px;height:19px;background:#2c2c2c;"></div>
<svg style="left:70px;top:1063px;" width="6" height="9" viewBox="0 0 6 9"><path d="M0,0 L5.5,4.5 L0,9 Z" fill="#c0b9b9"/></svg>
<svg style="left:83px;top:1060px;" width="11" height="13" viewBox="0 0 11 13"><path d="M5.5,0 L11,3 V10 L5.5,13 L0,10 V3 Z" fill="#42a5e2"/><path d="M0.3,3.6 L5.5,6.6 L10.7,3.6" fill="none" stroke="#403e3f" stroke-width="1"/></svg>
<div style="left:99px;top:1057px;width:92px;height:19px;overflow:hidden"><span class="t" style="position:absolute;left:0;top:5.84px;font-size:12px;color:#eeeeee">Bumper</span></div>
<svg style="left:197px;top:1064px;" width="6" height="6" viewBox="0 0 6 6"><rect x="0" y="0" width="5" height="5" fill="#222" opacity="0.6"/><path d="M1.5,5.5 H5.5 V1.5" stroke="#8a8686" stroke-width="1" fill="none"/></svg>
<svg style="left:232px;top:1064px;" width="6" height="6" viewBox="0 0 6 6"><rect x="0" y="0" width="5" height="5" fill="#222" opacity="0.6"/><path d="M1.5,5.5 H5.5 V1.5" stroke="#8a8686" stroke-width="1" fill="none"/></svg>
<svg style="left:210px;top:1062px;" width="12" height="10" viewBox="0 0 12 10"><path d="M0.8,5 Q6,-0.5 11.2,5 Q6,10.5 0.8,5 Z" fill="none" stroke="#c4bcbc" stroke-width="1.1"/><ellipse cx="6" cy="5" rx="1.6" ry="3" fill="#c4bcbc"/></svg>
<div style="left:270px;top:1057px;width:598px;height:19px;background:#7a86bd;"></div>
<div style="left:868px;top:1056px;width:2px;height:20px;background:#111;"></div>
<div style="left:0px;top:1077px;width:18px;height:19px;background:#403e3f;"></div>
<div style="left:19px;top:1077px;width:172px;height:19px;background:#403e3f;"></div>
<div style="left:192px;top:1077px;width:52px;height:19px;background:#403e3f;"></div>
<div style="left:254px;top:1077px;width:1269px;height:19px;background:#403e3f;"></div>
<div style="left:244px;top:1077px;width:10px;height:19px;background:#2c2c2c;"></div>
<svg style="left:70px;top:1083px;" width="6" height="9" viewBox="0 0 6 9"><path d="M0,0 L5.5,4.5 L0,9 Z" fill="#c0b9b9"/></svg>
<svg style="left:83px;top:1080px;" width="11" height="13" viewBox="0 0 11 13"><path d="M5.5,0 L11,3 V10 L5.5,13 L0,10 V3 Z" fill="#42a5e2"/><path d="M0.3,3.6 L5.5,6.6 L10.7,3.6" fill="none" stroke="#403e3f" stroke-width="1"/></svg>
<div style="left:99px;top:1077px;width:92px;height:19px;overflow:hidden"><span class="t" style="position:absolute;left:0;top:5.84px;font-size:12px;color:#eeeeee">Steering_Wheel</span></div>
<svg style="left:197px;top:1084px;" width="6" height="6" viewBox="0 0 6 6"><rect x="0" y="0" width="5" height="5" fill="#222" opacity="0.6"/><path d="M1.5,5.5 H5.5 V1.5" stroke="#8a8686" stroke-width="1" fill="none"/></svg>
<svg style="left:232px;top:1084px;" width="6" height="6" viewBox="0 0 6 6"><rect x="0" y="0" width="5" height="5" fill="#222" opacity="0.6"/><path d="M1.5,5.5 H5.5 V1.5" stroke="#8a8686" stroke-width="1" fill="none"/></svg>
<svg style="left:210px;top:1082px;" width="12" height="10" viewBox="0 0 12 10"><path d="M0.8,5 Q6,-0.5 11.2,5 Q6,10.5 0.8,5 Z" fill="none" stroke="#c4bcbc" stroke-width="1.1"/><ellipse cx="6" cy="5" rx="1.6" ry="3" fill="#c4bcbc"/></svg>
<div style="left:270px;top:1077px;width:598px;height:19px;background:#7a86bd;"></div>
<div style="left:868px;top:1076px;width:2px;height:20px;background:#111;"></div>
<div style="left:244px;top:837px;width:6px;height:58px;background:#9b9696;border-radius:3px"></div>
<div style="left:1523px;top:837px;width:6px;height:256px;background:#2e2d2e;"></div>
<div style="left:1523px;top:837px;width:6px;height:58px;background:#9b9696;border-radius:3px"></div>
<div style="left:269px;top:835px;width:1px;height:258px;background:#c01f1f;"></div>
<svg style="left:262px;top:817px;" width="15" height="19" viewBox="0 0 15 19"><path d="M0.5,2 Q0.5,0.5 2,0.5 H13 Q14.5,0.5 14.5,2 V11 L7.5,18 L0.5,11 Z" fill="#b8242a"/><text x="7.5" y="12" font-size="11" font-family="Liberation Sans" fill="#c84040" text-anchor="middle">0</text></svg>
<div style="left:0px;top:1093px;width:1529px;height:10px;background:#2c2c2c;"></div>
<div style="left:0px;top:1103px;width:1529px;height:24px;background:#414042;"></div>
<svg style="left:7px;top:1109px;" width="11" height="11" viewBox="0 0 11 11"><rect x="0" y="0" width="10.5" height="10.5" fill="#9ea5ea"/><path d="M5,10.5 L10.5,5 V10.5 Z" fill="#414042"/><path d="M6.5,10.5 L10.5,6.5 V10.5 Z" fill="#9ea5ea"/></svg>
<svg style="left:30px;top:1109px;" width="8" height="12" viewBox="0 0 8 12"><path d="M1,3 L6.5,1" stroke="#42a5e2" stroke-width="1.2"/><path d="M1,4 V11 M3,4 V11 M5,4 V11 M7,4 V11" stroke="#a39e9e" stroke-width="1"/></svg>
<svg style="left:50px;top:1109px;" width="12" height="12" viewBox="0 0 12 12"><circle cx="9.5" cy="2.5" r="2.2" fill="#b5afaf"/><circle cx="2.5" cy="6" r="2.2" fill="#b5afaf"/><circle cx="9.5" cy="9.5" r="2.2" fill="#b5afaf"/><path d="M9.5,2.5 L2.5,6 L9.5,9.5" stroke="#b5afaf" stroke-width="1.1" fill="none"/></svg>
<svg style="left:75px;top:1109px;" width="10" height="12" viewBox="0 0 10 12"><path d="M0.5,0.5 H9 V3 H8.3 L7.8,1.8 H5.5 V10.5 H7 V11.5 H2.5 V10.5 H4 V1.8 H1.7 L1.2,3 H0.5 Z" fill="#b5afaf"/></svg>
<svg style="left:95px;top:1108px;" width="13" height="13" viewBox="0 0 13 13"><path d="M0,0.5 H12.5 L7.5,6 V12.5 H5 V6 Z" fill="#b5afaf"/></svg>
<span class="t" style="left:255px;top:1109.84px;font-size:12px;color:#eeeeee;">0:00.000</span>
<svg style="left:354px;top:1110px;" width="10" height="11" viewBox="0 0 10 11"><rect x="0.5" y="0.5" width="1.8" height="10" fill="#b5afaf"/><path d="M9,0.5 V10.5 L2.5,5.5 Z" fill="#b5afaf"/></svg>
<svg style="left:376px;top:1110px;" width="11" height="11" viewBox="0 0 11 11"><path d="M0.5,0.5 L10,5.5 L0.5,10.5 Z" fill="#b5afaf"/></svg>
<svg style="left:398px;top:1110px;" width="10" height="11" viewBox="0 0 10 11"><rect x="7.5" y="0.5" width="1.8" height="10" fill="#b5afaf"/><path d="M0.5,0.5 V10.5 L7,5.5 Z" fill="#b5afaf"/></svg>
<div style="left:450px;top:1115px;width:10px;height:1.8px;background:#b5afaf;"></div>
<div style="left:466px;top:1115px;width:100px;height:1.5px;background:#b5afaf;"></div>
<div style="left:470px;top:1110px;width:12px;height:11px;background:#9b9696;border-radius:4px"></div>
<svg style="left:572px;top:1110px;" width="11" height="11" viewBox="0 0 11 11"><path d="M5.5,0.5 V10.5 M0.5,5.5 H10.5" stroke="#b5afaf" stroke-width="1.8"/></svg>
<div style="left:0px;top:1127px;width:2060px;height:1px;background:#2f8fd6;"></div></body></html>
